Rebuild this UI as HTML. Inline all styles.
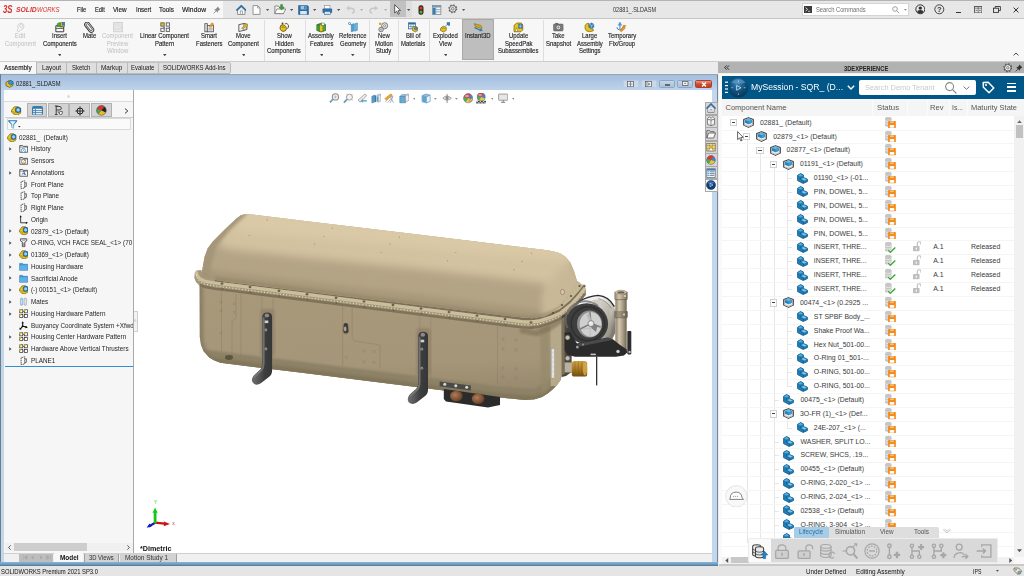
<!DOCTYPE html>
<html lang="en"><head><meta charset="utf-8"><title>SOLIDWORKS Premium 2021 SP3.0 - 02881_.SLDASM</title>
<style>
html,body{margin:0;padding:0}
body{width:1024px;height:576px;overflow:hidden;position:relative;background:#f0f0f0;font-family:"Liberation Sans",sans-serif;}
.r{position:absolute;display:block}
.t{position:absolute;white-space:pre;transform-origin:0 50%;display:block}
.i{font-style:italic}
.b{-webkit-text-stroke:0.15px currentColor}
</style></head><body>
<div class="r" style="left:0px;top:0px;width:1024px;height:18.2px;background:#e7e7e7;"></div>
<div class="r" style="left:0px;top:0px;width:223px;height:18.2px;background:#f7f7f7;"></div>
<div class="r" style="left:0px;top:0px;width:1024px;height:0.9px;background:#b4b4b4;"></div>
<div class="r" style="left:0px;top:17.6px;width:1024px;height:0.9px;background:#c6c6c6;"></div>
<span class="t i" style="left:3.00px;top:2.50px;font-size:10.5px;line-height:12.6px;color:#d9322e;font-weight:bold;transform:scaleX(0.747);">3S</span>
<span class="t i" style="left:16.20px;top:4.80px;font-size:8px;line-height:9.6px;color:#d9322e;font-weight:bold;transform:scaleX(0.847);">SOLID</span>
<span class="t i" style="left:37.20px;top:4.80px;font-size:8px;line-height:9.6px;color:#d9322e;transform:scaleX(0.748);">WORKS</span>
<span class="t b" style="left:76.50px;top:5.20px;font-size:8px;line-height:9.6px;color:#161616;transform:scaleX(0.714);">File</span>
<span class="t b" style="left:94.60px;top:5.20px;font-size:8px;line-height:9.6px;color:#161616;transform:scaleX(0.711);">Edit</span>
<span class="t b" style="left:113.20px;top:5.20px;font-size:8px;line-height:9.6px;color:#161616;transform:scaleX(0.791);">View</span>
<span class="t b" style="left:136.00px;top:5.20px;font-size:8px;line-height:9.6px;color:#161616;transform:scaleX(0.760);">Insert</span>
<span class="t b" style="left:159.00px;top:5.20px;font-size:8px;line-height:9.6px;color:#161616;transform:scaleX(0.793);">Tools</span>
<span class="t b" style="left:182.00px;top:5.20px;font-size:8px;line-height:9.6px;color:#161616;transform:scaleX(0.844);">Window</span>
<svg class="r" style="left:213px;top:5.5px;" width="8" height="8" viewBox="0 0 8 8"><path d="M4.6 0.6 L7.4 3.4 L6.4 3.8 L5 5.2 L4.8 6.8 L1.2 3.2 L2.8 3 L4.2 1.6Z" fill="#8a8a8a"/><path d="M3 5 L0.6 7.4" stroke="#8a8a8a" stroke-width="0.8"/></svg>
<svg class="r" style="left:235.6px;top:4.6px;" width="10.6" height="10" viewBox="0 0 10.6 10"><path d="M1.6 5.4 L1.6 9.4 L9 9.4 L9 5.4" fill="#fff" stroke="#777" stroke-width="0.8"/><path d="M0.4 5.6 L5.3 0.8 L10.2 5.6" fill="none" stroke="#2f6ea5" stroke-width="1.7" stroke-linejoin="miter"/><rect x="4.2" y="6" width="2.2" height="3.4" fill="#fff" stroke="#777" stroke-width="0.6"/></svg>
<svg class="r" style="left:252.4px;top:4.6px;" width="9" height="10" viewBox="0 0 9 10"><path d="M1 0.6 L5.6 0.6 L8 3 L8 9.4 L1 9.4Z" fill="#fdfdfd" stroke="#8a8a8a" stroke-width="0.9" stroke-linejoin="round"/><path d="M5.6 0.6 L5.6 3 L8 3" fill="none" stroke="#8a8a8a" stroke-width="0.7"/></svg>
<svg class="r" style="left:266.4px;top:8.6px;" width="3.2" height="2" viewBox="0 0 3.2 2"><path d="M0 0h3.2l-1.6 2z" fill="#555"/></svg>
<svg class="r" style="left:273.6px;top:4.4px;" width="12.4" height="10.4" viewBox="0 0 12.4 10.4"><path d="M0.8 2 L4.2 2 L5.2 3.2 L9.4 3.2 L9.4 9.6 L0.8 9.6Z" fill="#f3f3f3" stroke="#777" stroke-width="0.8" stroke-linejoin="round"/><path d="M0.8 9.6 L2.8 5 L11.8 5 L9.4 9.6Z" fill="#fff" stroke="#777" stroke-width="0.8" stroke-linejoin="round"/><path d="M6.6 0.6 L6.6 3.4 L5 3.4 L7.6 6 L10.2 3.4 L8.6 3.4 L8.6 0.6Z" fill="#3ea33a" stroke="#1f6f22" stroke-width="0.4"/></svg>
<svg class="r" style="left:289.7px;top:8.6px;" width="3.2" height="2" viewBox="0 0 3.2 2"><path d="M0 0h3.2l-1.6 2z" fill="#555"/></svg>
<svg class="r" style="left:298px;top:4.6px;" width="11" height="10" viewBox="0 0 11 10"><path d="M0.6 0.6 L9.4 0.6 L10.4 1.6 L10.4 9.4 L0.6 9.4Z" fill="#2f6ea5" stroke="#1f4f7c" stroke-width="0.6"/><rect x="2.6" y="0.8" width="5.8" height="3.6" fill="#9cc3e2"/><rect x="6.2" y="1.2" width="1.4" height="2.6" fill="#2f6ea5"/><rect x="2.2" y="6" width="6.6" height="3.4" fill="#d6e6f3"/></svg>
<svg class="r" style="left:313.2px;top:8.6px;" width="3.2" height="2" viewBox="0 0 3.2 2"><path d="M0 0h3.2l-1.6 2z" fill="#555"/></svg>
<svg class="r" style="left:322px;top:4.6px;" width="10.6" height="10" viewBox="0 0 10.6 10"><rect x="2.6" y="0.6" width="5.4" height="3.4" fill="#fff" stroke="#888" stroke-width="0.6"/><rect x="0.5" y="3.4" width="9.6" height="4.6" rx="0.8" fill="#2f6ea5"/><rect x="2.4" y="6.4" width="5.8" height="3.2" fill="#fff" stroke="#2f6ea5" stroke-width="0.7"/><path d="M3.4 7.6h3.8M3.4 8.6h3.8" stroke="#9ab" stroke-width="0.4"/></svg>
<svg class="r" style="left:336.9px;top:8.6px;" width="3.2" height="2" viewBox="0 0 3.2 2"><path d="M0 0h3.2l-1.6 2z" fill="#555"/></svg>
<svg class="r" style="left:345.6px;top:5.2px;" width="9.2" height="8.4" viewBox="0 0 9.2 8.4"><path d="M0.8 3.2 L5 3.2 Q8.2 3.2 8.2 6 Q8.2 8 6 8" fill="none" stroke="#c7c7c7" stroke-width="1.5"/><path d="M0.4 3.2 L3.4 0.6 L3.4 5.8Z" fill="#c7c7c7"/></svg>
<svg class="r" style="left:360px;top:8.6px;" width="3.2" height="2" viewBox="0 0 3.2 2"><path d="M0 0h3.2l-1.6 2z" fill="#b5b5b5"/></svg>
<svg class="r" style="left:369.2px;top:5.2px;" width="9.2" height="8.4" viewBox="0 0 9.2 8.4"><path d="M8.4 3.2 L4.2 3.2 Q1 3.2 1 6 Q1 8 3.2 8" fill="none" stroke="#c7c7c7" stroke-width="1.5"/><path d="M8.8 3.2 L5.8 0.6 L5.8 5.8Z" fill="#c7c7c7"/></svg>
<svg class="r" style="left:383.6px;top:8.6px;" width="3.2" height="2" viewBox="0 0 3.2 2"><path d="M0 0h3.2l-1.6 2z" fill="#b5b5b5"/></svg>
<div class="r" style="left:389.6px;top:0.9px;width:16.2px;height:16.4px;background:#c1c1c1;"></div>
<div class="r" style="left:406.1px;top:0.9px;width:5.8px;height:16.4px;background:#dedede;"></div>
<svg class="r" style="left:393.8px;top:3.8px;" width="8" height="11" viewBox="0 0 8 11"><path d="M0.7 0.7 L0.7 9 L2.7 7.2 L4.1 10.3 L5.4 9.7 L4 6.7 L6.6 6.5Z" fill="#fff" stroke="#3a3a3a" stroke-width="0.8" stroke-linejoin="round"/></svg>
<svg class="r" style="left:407.2px;top:8.6px;" width="3.2" height="2" viewBox="0 0 3.2 2"><path d="M0 0h3.2l-1.6 2z" fill="#555"/></svg>
<svg class="r" style="left:417.8px;top:4.6px;" width="6" height="10" viewBox="0 0 6 10"><rect x="0.5" y="0.3" width="5" height="9.4" rx="2.2" fill="#3b2b1e"/><circle cx="3" cy="2.9" r="1.5" fill="#e23a2a"/><circle cx="3" cy="7" r="1.5" fill="#46b43c"/></svg>
<svg class="r" style="left:432.2px;top:4.6px;" width="9.4" height="10" viewBox="0 0 9.4 10"><rect x="0.5" y="0.5" width="8.4" height="9" fill="#f1f4f7" stroke="#6b7c8c" stroke-width="0.7"/><rect x="0.5" y="0.5" width="8.4" height="2" fill="#7d98b0"/><rect x="0.9" y="2.8" width="2.6" height="6.4" fill="#2f7fc0"/><path d="M4 4.6h4.6M4 6.8h4.6M3.8 2.6v6.8" stroke="#6b7c8c" stroke-width="0.6"/></svg>
<svg class="r" style="left:448px;top:4.4px;" width="9.6" height="9.6" viewBox="0 0 9.6 9.6"><circle cx="4.8" cy="4.8" r="3.3" fill="none" stroke="#6c6c6c" stroke-width="1"/><circle cx="4.8" cy="4.8" r="3.9" fill="none" stroke="#6c6c6c" stroke-width="1.3" stroke-dasharray="1.5 1.56"/><circle cx="4.8" cy="4.8" r="1.3" fill="none" stroke="#6c6c6c" stroke-width="0.8"/></svg>
<svg class="r" style="left:462.4px;top:8.6px;" width="3.2" height="2" viewBox="0 0 3.2 2"><path d="M0 0h3.2l-1.6 2z" fill="#555"/></svg>
<span class="t" style="left:612.50px;top:4.80px;font-size:8px;line-height:9.6px;color:#333;transform:scaleX(0.696);">02881_.SLDASM</span>
<div class="r" style="left:801.8px;top:3.4px;width:106.8px;height:12.2px;background:#fff;border:0.6px solid #d4d4d4;box-sizing:border-box"></div>
<div class="r" style="left:804px;top:5.5px;width:7.6px;height:7px;background:#3c3c3c;"></div>
<svg class="r" style="left:805px;top:6.6px;" width="5.6" height="5" viewBox="0 0 5.6 5"><path d="M0.6 0.6 L2.6 2.4 L0.6 4.2" fill="none" stroke="#fff" stroke-width="0.8"/><path d="M3 4.3h2.2" stroke="#fff" stroke-width="0.7"/></svg>
<span class="t" style="left:815.60px;top:4.90px;font-size:8px;line-height:9.6px;color:#6e6e6e;transform:scaleX(0.724);">Search Commands</span>
<svg class="r" style="left:892.4px;top:5.6px;" width="8" height="8" viewBox="0 0 8 8"><circle cx="3" cy="3" r="2.3" fill="none" stroke="#8a8a8a" stroke-width="0.8"/><path d="M4.7 4.7 L7.2 7.2" stroke="#8a8a8a" stroke-width="0.9"/></svg>
<svg class="r" style="left:903.6px;top:8.6px;" width="3.2" height="2" viewBox="0 0 3.2 2"><path d="M0 0h2.8l-1.4 1.8z" fill="#888"/></svg>
<svg class="r" style="left:914.6px;top:4.2px;" width="10.6" height="10.6" viewBox="0 0 10.6 10.6"><circle cx="5.3" cy="5.3" r="4.5" fill="none" stroke="#333" stroke-width="1"/><circle cx="5.3" cy="4.1" r="1.7" fill="#333"/><path d="M2.2 8.2 Q2.4 6 5.3 6 Q8.2 6 8.4 8.2 Q7 9.6 5.3 9.6 Q3.6 9.6 2.2 8.2Z" fill="#333"/></svg>
<svg class="r" style="left:934px;top:4.2px;" width="10.6" height="10.6" viewBox="0 0 10.6 10.6"><circle cx="5.3" cy="5.3" r="4.5" fill="none" stroke="#333" stroke-width="0.9"/></svg>
<span class="t" style="left:937.01px;top:5.30px;font-size:7.5px;line-height:9.0px;color:#333;font-weight:bold;">?</span>
<div class="r" style="left:956px;top:12px;width:5.4px;height:1.3px;background:#333;"></div>
<svg class="r" style="left:973.5px;top:5.8px;" width="8.4" height="7.4" viewBox="0 0 8.4 7.4"><rect x="0.5" y="0.5" width="7.4" height="6.4" fill="none" stroke="#444" stroke-width="0.8"/><path d="M4.2 0.5v6.4M0.5 2.2h7.4" stroke="#444" stroke-width="0.6"/><path d="M1.6 4.4h1.8M5 4.4h1.8" stroke="#444" stroke-width="0.7"/></svg>
<svg class="r" style="left:993px;top:5.8px;" width="8" height="7" viewBox="0 0 8 7"><rect x="0.5" y="2.2" width="5" height="4.2" fill="none" stroke="#333" stroke-width="0.9"/><path d="M2.2 2.2 L2.2 0.5 L7.4 0.5 L7.4 4.6 L5.6 4.6" fill="none" stroke="#333" stroke-width="0.9"/></svg>
<svg class="r" style="left:1012.6px;top:6.6px;" width="6" height="6" viewBox="0 0 6 6"><path d="M0.6 0.6 L5.4 5.4 M5.4 0.6 L0.6 5.4" stroke="#333" stroke-width="1"/></svg>
<div class="r" style="left:0px;top:18.5px;width:1024px;height:43.3px;background:#f7f7f7;"></div>
<div class="r" style="left:0px;top:61.4px;width:1024px;height:0.9px;background:#cdcdcd;"></div>
<div class="r" style="left:462.3px;top:19.4px;width:31.9px;height:41px;background:#bebebe;border:0.6px solid #a9a9a9;box-sizing:border-box"></div>
<span class="t" style="left:15.36px;top:31.48px;font-size:7.7px;line-height:9.24px;color:#bdbdbd;transform:scaleX(0.775);">Edit</span>
<span class="t" style="left:5.08px;top:38.63px;font-size:7.7px;line-height:9.24px;color:#bdbdbd;transform:scaleX(0.775);">Component</span>
<svg class="r" style="left:15.3px;top:22.2px;" width="10.4" height="10.4" viewBox="0 0 10 10"><path d="M2 8.6 L3.2 6 A3 3 0 1 1 6.2 7.2 L3.6 9.4Z" fill="none" stroke="#cfcfcf" stroke-width="0.9"/><circle cx="6" cy="3.6" r="1.6" fill="none" stroke="#cfcfcf" stroke-width="0.8"/></svg>
<span class="t b" style="left:52.24px;top:31.48px;font-size:7.7px;line-height:9.24px;color:#1c1c1c;transform:scaleX(0.775);">Insert</span>
<span class="t b" style="left:42.78px;top:38.63px;font-size:7.7px;line-height:9.24px;color:#1c1c1c;transform:scaleX(0.775);">Components</span>
<svg class="r" style="left:57.900000000000006px;top:53.8px;" width="3.6" height="2.4" viewBox="0 0 3.6 2.4"><path d="M0 0h3.6l-1.8 2.2z" fill="#444"/></svg>
<svg class="r" style="left:54.5px;top:22.2px;" width="10.4" height="10.4" viewBox="0 0 10 10"><path d="M0.8 3.6 L4 3.6 L4.8 4.6 L8.4 4.6 L8.4 9.4 L0.8 9.4Z" fill="#f6f6f6" stroke="#333" stroke-width="0.9" stroke-linejoin="round"/><path d="M0.8 6.2h7.6" stroke="#333" stroke-width="0.7"/><path d="M2.2 3.4 L2.2 1.6 L4.6 0.6 L7 1.4 L7 4.4 L2.2 4.4Z" fill="#4aa83c" stroke="#1f6f22" stroke-width="0.5"/><rect x="5.6" y="0.8" width="3.8" height="3.4" fill="#e9c21c" stroke="#7a6208" stroke-width="0.5"/><rect x="7" y="0.4" width="2.8" height="2.6" fill="#3a8bd0" stroke="#1c4f80" stroke-width="0.4"/></svg>
<span class="t b" style="left:82.87px;top:31.48px;font-size:7.7px;line-height:9.24px;color:#1c1c1c;transform:scaleX(0.775);">Mate</span>
<svg class="r" style="left:84.3px;top:22.2px;" width="10.4" height="10.4" viewBox="0 0 10 10"><g transform="rotate(-38 5 5)"><rect x="2.6" y="-0.6" width="4.8" height="11.2" rx="2.4" fill="#e9e9e9" stroke="#3c3c3c" stroke-width="0.9"/><rect x="3.9" y="1" width="2.2" height="8" rx="1.1" fill="none" stroke="#3c3c3c" stroke-width="0.7"/></g></svg>
<span class="t" style="left:102.48px;top:31.48px;font-size:7.7px;line-height:9.24px;color:#bdbdbd;transform:scaleX(0.775);">Component</span>
<span class="t" style="left:107.29px;top:38.63px;font-size:7.7px;line-height:9.24px;color:#bdbdbd;transform:scaleX(0.775);">Preview</span>
<span class="t" style="left:107.29px;top:45.78px;font-size:7.7px;line-height:9.24px;color:#bdbdbd;transform:scaleX(0.775);">Window</span>
<svg class="r" style="left:112.7px;top:22.2px;" width="10.4" height="10.4" viewBox="0 0 10 10"><rect x="0.6" y="0.6" width="8.8" height="8.8" fill="#ececec" stroke="#cdcdcd" stroke-width="0.9"/><rect x="2" y="2" width="6" height="5.4" fill="none" stroke="#d6d6d6" stroke-width="0.7"/><circle cx="5.4" cy="5" r="1.6" fill="none" stroke="#d6d6d6" stroke-width="0.7"/></svg>
<span class="t b" style="left:140.45px;top:31.48px;font-size:7.7px;line-height:9.24px;color:#1c1c1c;transform:scaleX(0.775);">Linear Component</span>
<span class="t b" style="left:155.38px;top:38.63px;font-size:7.7px;line-height:9.24px;color:#1c1c1c;transform:scaleX(0.775);">Pattern</span>
<svg class="r" style="left:163.2px;top:53.8px;" width="3.6" height="2.4" viewBox="0 0 3.6 2.4"><path d="M0 0h3.6l-1.8 2.2z" fill="#444"/></svg>
<svg class="r" style="left:159.8px;top:22.2px;" width="10.4" height="10.4" viewBox="0 0 10 10"><rect x="0.8" y="0.8" width="3.2" height="3.2" fill="#e9c21c" stroke="#555" stroke-width="0.8"/><rect x="6" y="0.8" width="3.2" height="3.2" fill="#f2f2f2" stroke="#555" stroke-width="0.8"/><rect x="0.8" y="6" width="3.2" height="3.2" fill="#f2f2f2" stroke="#555" stroke-width="0.8"/><rect x="6" y="6" width="3.2" height="3.2" fill="#f2f2f2" stroke="#555" stroke-width="0.8"/><path d="M3 5.2 L4.6 4.2 L4.6 6.2Z M8.2 5.2 L9.8 4.2 L9.8 6.2Z" fill="#555"/></svg>
<span class="t b" style="left:200.84px;top:31.48px;font-size:7.7px;line-height:9.24px;color:#1c1c1c;transform:scaleX(0.775);">Smart</span>
<span class="t b" style="left:195.53px;top:38.63px;font-size:7.7px;line-height:9.24px;color:#1c1c1c;transform:scaleX(0.775);">Fasteners</span>
<svg class="r" style="left:203.60000000000002px;top:22.2px;" width="10.4" height="10.4" viewBox="0 0 10 10"><rect x="0.8" y="1.6" width="2.4" height="7.8" fill="#e6e6e6" stroke="#555" stroke-width="0.8"/><rect x="3.2" y="3.4" width="6" height="6" fill="#ededed" stroke="#555" stroke-width="0.8"/><path d="M4.4 6h3.8M4.4 7.6h3.8" stroke="#777" stroke-width="0.6"/><path d="M5 4.4 L7.6 0.8 L9.4 2 L7 4.8Z" fill="#f0a01e" stroke="#a8640a" stroke-width="0.4"/></svg>
<span class="t b" style="left:236.00px;top:31.48px;font-size:7.7px;line-height:9.24px;color:#1c1c1c;transform:scaleX(0.775);">Move</span>
<span class="t b" style="left:227.88px;top:38.63px;font-size:7.7px;line-height:9.24px;color:#1c1c1c;transform:scaleX(0.775);">Component</span>
<svg class="r" style="left:241.5px;top:53.8px;" width="3.6" height="2.4" viewBox="0 0 3.6 2.4"><path d="M0 0h3.6l-1.8 2.2z" fill="#444"/></svg>
<svg class="r" style="left:238.10000000000002px;top:22.2px;" width="10.4" height="10.4" viewBox="0 0 10 10"><path d="M0.8 2.6 L5.8 1.4 L5.8 8 L0.8 9.2Z" fill="#f4f4f4" stroke="#444" stroke-width="0.8" stroke-linejoin="round"/><path d="M5.8 1.4 L8.6 2.2 L8.6 7.2 L5.8 8" fill="#dcdcdc" stroke="#444" stroke-width="0.8" stroke-linejoin="round"/><path d="M3.4 5.8 L6.8 3.2 L6.2 2.2 L9.6 2 L8.4 5 L7.8 4.2 L4.2 6.8Z" fill="#e9c21c" stroke="#7a6208" stroke-width="0.4"/></svg>
<span class="t b" style="left:276.84px;top:31.48px;font-size:7.7px;line-height:9.24px;color:#1c1c1c;transform:scaleX(0.775);">Show</span>
<span class="t b" style="left:274.85px;top:38.63px;font-size:7.7px;line-height:9.24px;color:#1c1c1c;transform:scaleX(0.775);">Hidden</span>
<span class="t b" style="left:267.38px;top:45.78px;font-size:7.7px;line-height:9.24px;color:#1c1c1c;transform:scaleX(0.775);">Components</span>
<svg class="r" style="left:279.1px;top:22.2px;" width="10.4" height="10.4" viewBox="0 0 10 10"><path d="M1 5.4 Q1 2.4 4 2.6 L6.4 4.2 Q8 6 6.6 8 Q4.8 9.8 2.6 8.6 Q1 7.6 1 5.4Z" fill="#e9c21c" stroke="#5c4a08" stroke-width="0.8"/><path d="M5.6 1.8 Q7.8 0.6 9 2.8 Q9.6 5 8.2 6.4" fill="none" stroke="#5c4a08" stroke-width="0.9"/><circle cx="3.4" cy="1.4" r="0.9" fill="#444"/><path d="M2.6 5.2 Q4 3.8 5.4 5.6" fill="none" stroke="#5c4a08" stroke-width="0.6"/></svg>
<span class="t b" style="left:308.37px;top:31.48px;font-size:7.7px;line-height:9.24px;color:#1c1c1c;transform:scaleX(0.775);">Assembly</span>
<span class="t b" style="left:309.53px;top:38.63px;font-size:7.7px;line-height:9.24px;color:#1c1c1c;transform:scaleX(0.775);">Features</span>
<svg class="r" style="left:319.5px;top:53.8px;" width="3.6" height="2.4" viewBox="0 0 3.6 2.4"><path d="M0 0h3.6l-1.8 2.2z" fill="#444"/></svg>
<svg class="r" style="left:316.1px;top:22.2px;" width="10.4" height="10.4" viewBox="0 0 10 10"><path d="M0.8 2.6 L5 1.2 L9.2 2.6 L9.2 8.2 L5 9.6 L0.8 8.2Z" fill="#4aa83c" stroke="#1f6f22" stroke-width="0.7" stroke-linejoin="round"/><path d="M3 1.8 L3 9 M0.8 2.6 L5 4 L9.2 2.6 M5 4v5.6" stroke="#1f6f22" stroke-width="0.5" fill="none"/><rect x="3.6" y="2.8" width="3" height="6.4" fill="#e9c21c" stroke="#7a6208" stroke-width="0.4"/><rect x="5.4" y="1" width="2.6" height="2.2" fill="#f6f6f6" stroke="#555" stroke-width="0.4"/></svg>
<span class="t b" style="left:339.23px;top:31.48px;font-size:7.7px;line-height:9.24px;color:#1c1c1c;transform:scaleX(0.775);">Reference</span>
<span class="t b" style="left:339.90px;top:38.63px;font-size:7.7px;line-height:9.24px;color:#1c1c1c;transform:scaleX(0.775);">Geometry</span>
<svg class="r" style="left:351.2px;top:53.8px;" width="3.6" height="2.4" viewBox="0 0 3.6 2.4"><path d="M0 0h3.6l-1.8 2.2z" fill="#444"/></svg>
<svg class="r" style="left:347.8px;top:22.2px;" width="10.4" height="10.4" viewBox="0 0 10 10"><path d="M3.2 2.4 L5.6 1.6 L5.6 8.6 L3.2 9.4Z" fill="#4aa3d6" stroke="#2a78a8" stroke-width="0.5"/><path d="M6.4 1.8 L9 1 L9 8 L6.4 8.8Z" fill="#6bb8e2" stroke="#2a78a8" stroke-width="0.5"/><circle cx="1.4" cy="1.4" r="1" fill="none" stroke="#2a78a8" stroke-width="0.7"/><path d="M2 2 L3.4 3.4" stroke="#2a78a8" stroke-width="0.6"/></svg>
<span class="t b" style="left:377.53px;top:31.48px;font-size:7.7px;line-height:9.24px;color:#1c1c1c;transform:scaleX(0.775);">New</span>
<span class="t b" style="left:374.55px;top:38.63px;font-size:7.7px;line-height:9.24px;color:#1c1c1c;transform:scaleX(0.775);">Motion</span>
<span class="t b" style="left:375.87px;top:45.78px;font-size:7.7px;line-height:9.24px;color:#1c1c1c;transform:scaleX(0.775);">Study</span>
<svg class="r" style="left:378.3px;top:22.2px;" width="10.4" height="10.4" viewBox="0 0 10 10"><circle cx="6.4" cy="3.6" r="2.9" fill="#e4e4e4" stroke="#666" stroke-width="0.8"/><circle cx="6.4" cy="3.6" r="1" fill="#fff" stroke="#666" stroke-width="0.6"/><circle cx="3" cy="7.2" r="2.2" fill="#dcdcdc" stroke="#666" stroke-width="0.8"/><circle cx="3" cy="7.2" r="0.7" fill="#fff" stroke="#666" stroke-width="0.5"/><circle cx="2" cy="1.8" r="1.3" fill="#f0a01e"/></svg>
<span class="t b" style="left:405.70px;top:31.48px;font-size:7.7px;line-height:9.24px;color:#1c1c1c;transform:scaleX(0.775);">Bill of</span>
<span class="t b" style="left:400.90px;top:38.63px;font-size:7.7px;line-height:9.24px;color:#1c1c1c;transform:scaleX(0.775);">Materials</span>
<svg class="r" style="left:407.8px;top:22.2px;" width="10.4" height="10.4" viewBox="0 0 10 10"><rect x="0.6" y="0.8" width="6.6" height="5.8" fill="#fff" stroke="#2a5f8f" stroke-width="0.7"/><rect x="0.6" y="0.8" width="6.6" height="1.6" fill="#2f6ea5"/><path d="M2.8 2.4v4.2M5 2.4v4.2M0.6 4.4h6.6" stroke="#2a5f8f" stroke-width="0.5"/><path d="M4.4 5.2 L7 4 L9.4 5.4 L9.4 8.2 L7 9.6 L4.4 8.2Z" fill="#e9c21c" stroke="#7a6208" stroke-width="0.6"/><path d="M6.2 5.6 L7.8 4.8 L9 5.6 L9 7 L7.6 7.8 L6.2 7Z" fill="#3a8bd0" stroke="#1c4f80" stroke-width="0.4"/></svg>
<span class="t b" style="left:432.86px;top:31.48px;font-size:7.7px;line-height:9.24px;color:#1c1c1c;transform:scaleX(0.775);">Exploded</span>
<span class="t b" style="left:438.89px;top:38.63px;font-size:7.7px;line-height:9.24px;color:#1c1c1c;transform:scaleX(0.775);">View</span>
<svg class="r" style="left:443.5px;top:53.8px;" width="3.6" height="2.4" viewBox="0 0 3.6 2.4"><path d="M0 0h3.6l-1.8 2.2z" fill="#444"/></svg>
<svg class="r" style="left:440.1px;top:22.2px;" width="10.4" height="10.4" viewBox="0 0 10 10"><path d="M0.6 6 L3.2 4 L6 5.2 L6 8 L3.4 9.6 L0.6 8.2Z" fill="#e9c21c" stroke="#7a6208" stroke-width="0.7"/><path d="M2 6.2 Q3.4 5.2 4.6 6.4" fill="none" stroke="#7a6208" stroke-width="0.5"/><path d="M5.2 4.2 L7.6 1.8" stroke="#2a78a8" stroke-width="0.7"/><path d="M6.8 0.6 L9.6 0.6 L9.6 3 L8.4 3.4 L6.8 2.2Z" fill="#3a8bd0" stroke="#1c4f80" stroke-width="0.5"/></svg>
<span class="t b" style="left:465.43px;top:31.48px;font-size:7.7px;line-height:9.24px;color:#1c1c1c;transform:scaleX(0.775);">Instant3D</span>
<svg class="r" style="left:473.0px;top:22.2px;" width="10.4" height="10.4" viewBox="0 0 10 10"><path d="M1.2 1.6 L7.6 3.4 L8.8 6.2 L2.4 4.4Z" fill="#e9c21c" stroke="#7a6208" stroke-width="0.6"/><path d="M2.4 2.6v1.2M3.8 3v1.2M5.2 3.4v1.2M6.6 3.8v1.2" stroke="#7a6208" stroke-width="0.4"/><path d="M1.4 5.4 L7.4 8" stroke="#2a78a8" stroke-width="1.1"/><path d="M6 8.8 L9.4 8.6 L7.6 6Z" fill="#2a78a8"/></svg>
<span class="t b" style="left:508.78px;top:31.48px;font-size:7.7px;line-height:9.24px;color:#1c1c1c;transform:scaleX(0.775);">Update</span>
<span class="t b" style="left:504.63px;top:38.63px;font-size:7.7px;line-height:9.24px;color:#1c1c1c;transform:scaleX(0.775);">SpeedPak</span>
<span class="t b" style="left:498.17px;top:45.78px;font-size:7.7px;line-height:9.24px;color:#1c1c1c;transform:scaleX(0.775);">Subassemblies</span>
<svg class="r" style="left:513.1999999999999px;top:22.2px;" width="10.4" height="10.4" viewBox="0 0 10 10"><path d="M1 3.2 L3.8 1 L8 1 L9.4 3 L9.4 7.6 L7.6 9.4 L1 9.4Z" fill="#e9c21c" stroke="#7a6208" stroke-width="0.7" stroke-linejoin="round"/><path d="M5.4 2.2 L8.8 2.2 L8.8 6 L5.4 6Z" fill="#3a8bd0" stroke="#1c4f80" stroke-width="0.5"/><path d="M2 9 L3.4 5.4 L4.8 9Z" fill="#fff" stroke="#7a6208" stroke-width="0.5"/><path d="M7.1 2.2v3.8M5.4 4.1h3.4" stroke="#cfe6f8" stroke-width="0.4"/></svg>
<span class="t b" style="left:552.20px;top:31.48px;font-size:7.7px;line-height:9.24px;color:#1c1c1c;transform:scaleX(0.775);">Take</span>
<span class="t b" style="left:545.89px;top:38.63px;font-size:7.7px;line-height:9.24px;color:#1c1c1c;transform:scaleX(0.775);">Snapshot</span>
<svg class="r" style="left:553.3px;top:22.2px;" width="10.4" height="10.4" viewBox="0 0 10 10"><rect x="0.5" y="2" width="9.2" height="6.6" rx="0.8" fill="#7d7d7d" stroke="#555" stroke-width="0.5"/><rect x="2.2" y="0.9" width="2.8" height="1.4" fill="#666"/><circle cx="5.2" cy="5.3" r="2.3" fill="#e6e6e6" stroke="#444" stroke-width="0.6"/><circle cx="5.2" cy="5.3" r="1" fill="#7d7d7d"/></svg>
<span class="t b" style="left:581.87px;top:31.48px;font-size:7.7px;line-height:9.24px;color:#1c1c1c;transform:scaleX(0.775);">Large</span>
<span class="t b" style="left:576.57px;top:38.63px;font-size:7.7px;line-height:9.24px;color:#1c1c1c;transform:scaleX(0.775);">Assembly</span>
<span class="t b" style="left:578.72px;top:45.78px;font-size:7.7px;line-height:9.24px;color:#1c1c1c;transform:scaleX(0.775);">Settings</span>
<svg class="r" style="left:584.3px;top:22.2px;" width="10.4" height="10.4" viewBox="0 0 10 10"><path d="M1 5.4 Q0.6 1.6 4.4 1.2 L4.8 5 Q5.4 7 8.6 6.6 L9 8.4 Q5 10.2 2.2 8.4 Q1 7.2 1 5.4Z" fill="#e9c21c" stroke="#7a6208" stroke-width="0.7"/><path d="M5 2.2 L7.2 1 L9.4 2.2 L9.4 5 L7.2 6.2 L5 5Z" fill="#3a8bd0" stroke="#1c4f80" stroke-width="0.5"/><path d="M5 2.2 L7.2 3.4 L9.4 2.2M7.2 3.4v2.8" stroke="#cfe6f8" stroke-width="0.4" fill="none"/></svg>
<span class="t b" style="left:607.51px;top:31.48px;font-size:7.7px;line-height:9.24px;color:#1c1c1c;transform:scaleX(0.775);">Temporary</span>
<span class="t b" style="left:608.50px;top:38.63px;font-size:7.7px;line-height:9.24px;color:#1c1c1c;transform:scaleX(0.775);">Fix/Group</span>
<svg class="r" style="left:616.4px;top:22.2px;" width="10.4" height="10.4" viewBox="0 0 10 10"><path d="M3.8 1v5.6M1.8 2.8h4M0.8 5 Q1.2 7.6 3.8 7.6 Q6.4 7.6 6.8 5" fill="none" stroke="#2f7fc0" stroke-width="0.9"/><circle cx="3.8" cy="1.2" r="0.8" fill="none" stroke="#2f7fc0" stroke-width="0.6"/><path d="M4 8.6 L7.4 3 L9.6 3.6 L8 5.4 L9 5.8 L5.2 9.4Z" fill="#f0901e" stroke="#b25e0a" stroke-width="0.4"/></svg>
<div class="r" style="left:263.7px;top:20px;width:0.8px;height:40.5px;background:#dedede;"></div>
<div class="r" style="left:305.4px;top:20px;width:0.8px;height:40.5px;background:#dedede;"></div>
<div class="r" style="left:369.3px;top:20px;width:0.8px;height:40.5px;background:#dedede;"></div>
<div class="r" style="left:397.5px;top:20px;width:0.8px;height:40.5px;background:#dedede;"></div>
<div class="r" style="left:428.8px;top:20px;width:0.8px;height:40.5px;background:#dedede;"></div>
<div class="r" style="left:543px;top:20px;width:0.8px;height:40.5px;background:#dedede;"></div>
<svg class="r" style="left:1013px;top:52.4px;" width="6" height="4" viewBox="0 0 6 4"><path d="M0.6 3.4 L3 1 L5.4 3.4" fill="none" stroke="#333" stroke-width="0.9"/></svg>
<div class="r" style="left:0px;top:62.2px;width:1024px;height:11.3px;background:#ebebeb;"></div>
<div class="r" style="left:36px;top:62.6px;width:193.5px;height:10.6px;background:#dedede;"></div>
<div class="r" style="left:0px;top:62.2px;width:36px;height:11.3px;background:#f7f7f7;"></div>
<span class="t b" style="left:4.20px;top:63.40px;font-size:8px;line-height:9.6px;color:#161616;transform:scaleX(0.796);">Assembly</span>
<span class="t" style="left:41.60px;top:63.40px;font-size:8px;line-height:9.6px;color:#161616;transform:scaleX(0.791);">Layout</span>
<span class="t" style="left:71.60px;top:63.40px;font-size:8px;line-height:9.6px;color:#161616;transform:scaleX(0.752);">Sketch</span>
<span class="t" style="left:100.60px;top:63.40px;font-size:8px;line-height:9.6px;color:#161616;transform:scaleX(0.802);">Markup</span>
<span class="t" style="left:130.60px;top:63.40px;font-size:8px;line-height:9.6px;color:#161616;transform:scaleX(0.752);">Evaluate</span>
<span class="t" style="left:162.60px;top:63.40px;font-size:8px;line-height:9.6px;color:#161616;transform:scaleX(0.749);">SOLIDWORKS Add-Ins</span>
<div class="r" style="left:36px;top:62.6px;width:0.8px;height:10.7px;background:#b9b9b9;"></div>
<div class="r" style="left:65.5px;top:62.6px;width:0.8px;height:10.7px;background:#b9b9b9;"></div>
<div class="r" style="left:95.5px;top:62.6px;width:0.8px;height:10.7px;background:#b9b9b9;"></div>
<div class="r" style="left:126.5px;top:62.6px;width:0.8px;height:10.7px;background:#b9b9b9;"></div>
<div class="r" style="left:158px;top:62.6px;width:0.8px;height:10.7px;background:#b9b9b9;"></div>
<div class="r" style="left:229.5px;top:62.6px;width:0.8px;height:10.7px;background:#b9b9b9;"></div>
<div class="r" style="left:36px;top:62.3px;width:194px;height:0.7px;background:#c4c4c4;"></div>
<div class="r" style="left:36px;top:72.9px;width:194px;height:0.7px;background:#b9b9b9;"></div>
<div class="r" style="left:718.1px;top:62.3px;width:305.9px;height:11.0px;background:#b2b2b2;"></div>
<span class="t" style="left:844.30px;top:63.50px;font-size:7.5px;line-height:9.0px;color:#222;font-weight:bold;transform:scaleX(0.763);">3DEXPERIENCE</span>
<svg class="r" style="left:724px;top:64.8px;" width="5.6" height="5.2" viewBox="0 0 5.6 5.2"><path d="M2.6 0.5 L0.6 2.6 L2.6 4.7 M5 0.5 L3 2.6 L5 4.7" fill="none" stroke="#222" stroke-width="0.9"/></svg>
<svg class="r" style="left:1002.5px;top:63px;" width="9.6" height="9.6" viewBox="0 0 9.6 9.6"><circle cx="4.8" cy="4.8" r="3.2" fill="#f3f3f3" stroke="#555" stroke-width="0.9"/><circle cx="4.8" cy="4.8" r="3.9" fill="none" stroke="#555" stroke-width="1.2" stroke-dasharray="1.5 1.56"/><circle cx="4.8" cy="4.8" r="1.2" fill="none" stroke="#555" stroke-width="0.7"/></svg>
<svg class="r" style="left:1014.5px;top:63.6px;" width="8" height="8" viewBox="0 0 8 8"><path d="M4.4 0.6 L7.4 3.6 L6.2 4 L5 5.2 L4.8 6.8 L1.2 3.2 L2.8 3 L4 1.8Z" fill="#333"/><path d="M3 5 L0.6 7.4" stroke="#333" stroke-width="0.8"/></svg>
<div class="r" style="left:0px;top:73.5px;width:718.6px;height:492px;background:#c3d7ec;"></div>
<div class="r" style="left:1px;top:74.5px;width:716px;height:15.7px;background:linear-gradient(#a3bedf,#bed3ea);"></div>
<div class="r" style="left:0px;top:73.5px;width:718.6px;height:1px;background:#98a2ae;"></div>
<div class="r" style="left:0px;top:73.5px;width:1.1px;height:492px;background:#6f7c8a;"></div>
<div class="r" style="left:716.9px;top:74.5px;width:1.1px;height:491px;background:#73889b;"></div>
<div class="r" style="left:718px;top:73.5px;width:0.8px;height:492px;background:#ececec;"></div>
<div class="r" style="left:0px;top:562px;width:718px;height:3.4px;background:linear-gradient(#8fb4d6,#5d93bd);"></div>
<div class="r" style="left:0px;top:564.8px;width:718px;height:0.9px;background:#5c7f93;"></div>
<span class="t" style="left:15.50px;top:79.10px;font-size:7.5px;line-height:9.0px;color:#1a1a1a;transform:scaleX(0.768);">02881_.SLDASM</span>
<svg class="r" style="left:5px;top:78.5px;" width="9" height="9" viewBox="0 0 9 9"><path d="M1 3.4 L4.4 1.4 L8 3 L8 6.4 L4.6 8.4 L1 6.6Z" fill="#e9c21c" stroke="#5a4a08" stroke-width="0.7"/><path d="M3.6 2.4 L6 1.4 L8 2.6 L8 5 L5.6 6 L3.6 4.8Z" fill="#3f8fd0" stroke="#1d4e7c" stroke-width="0.5"/></svg>
<div class="r" style="left:623.1px;top:79.7px;width:15.9px;height:8.7px;background:#c9d9ea;border:0.6px solid #bccde0;box-sizing:border-box;border-radius:1.5px"></div>
<div class="r" style="left:641.2px;top:79.7px;width:15.8px;height:8.7px;background:#c9d9ea;border:0.6px solid #bccde0;box-sizing:border-box;border-radius:1.5px"></div>
<div class="r" style="left:658.9px;top:79.7px;width:16.4px;height:8.7px;background:linear-gradient(#c4d5e8,#a9c0da);border:0.6px solid #8ea6c0;box-sizing:border-box;border-radius:1.5px"></div>
<div class="r" style="left:677.3px;top:79.7px;width:15.8px;height:8.7px;background:linear-gradient(#c4d5e8,#a9c0da);border:0.6px solid #8ea6c0;box-sizing:border-box;border-radius:1.5px"></div>
<div class="r" style="left:695.1px;top:79.7px;width:16.6px;height:8.7px;background:linear-gradient(#e39a86,#cf4a30 55%,#c23c22);border:0.6px solid #a8402e;box-sizing:border-box;border-radius:1.5px"></div>
<svg class="r" style="left:700.6px;top:81.6px;" width="6" height="5" viewBox="0 0 6 5"><path d="M1 0.6 L5 4.4 M5 0.6 L1 4.4" stroke="#fff" stroke-width="1.4"/></svg>
<svg class="r" style="left:627.2px;top:80.7px;" width="7" height="6.4" viewBox="0 0 7 6.4"><rect x="0.4" y="0.4" width="6.2" height="5.4" fill="#eef2f6" stroke="#555" stroke-width="0.7"/><path d="M3.5 0.6v5M1.6 3.1h1.2M4.2 3.1h1.2" stroke="#555" stroke-width="0.7"/></svg>
<svg class="r" style="left:645.3px;top:80.7px;" width="7" height="6.4" viewBox="0 0 7 6.4"><rect x="0.4" y="0.4" width="6.2" height="5.4" fill="#eef2f6" stroke="#555" stroke-width="0.7"/><path d="M2 0.6v5" stroke="#555" stroke-width="0.7"/><path d="M3.4 1.8 L5.2 3.1 L3.4 4.4Z" fill="#555"/></svg>
<div class="r" style="left:664.6px;top:84.2px;width:5.2px;height:1.5px;background:#f4f6f8;border:0.4px solid #667;box-sizing:border-box"></div>
<svg class="r" style="left:682.2px;top:81.2px;" width="6.4" height="5" viewBox="0 0 6.4 5"><rect x="0.4" y="0.4" width="5.6" height="4" fill="#eef2f6" stroke="#555" stroke-width="0.7"/><path d="M2.2 2.4h2" stroke="#555" stroke-width="0.7"/></svg>
<svg width="0" height="0" style="position:absolute"><defs>
<symbol id="lasm" viewBox="0 0 20 18" preserveAspectRatio="none"><path d="M0.9 8.2 L6.4 1.6 L12 1.2 L19 4.6 L19 13.2 L12.6 17 L6.2 16 L0.9 11.4Z" fill="#ecc81f" stroke="#6f5a08" stroke-width="1.3" stroke-linejoin="round"/><path d="M1.4 9 L6.6 12 L12.4 13 M6.6 12 L6.4 15.6" fill="none" stroke="#a8860c" stroke-width="1"/>
<path d="M8.8 4.4 L13.6 2 L18.6 4.4 L18.6 10.4 L13.8 12.8 L8.8 10.4Z" fill="#2f86d4" stroke="#15406e" stroke-width="1.2" stroke-linejoin="round"/><path d="M11 5.6 L13.8 4.4 L16.6 5.6 L16.6 9.2 L13.8 10.4 L11 9.2Z" fill="#9fd2f4"/></symbol>
<symbol id="lfld" viewBox="0 0 20 20"><path d="M1.6 3.2 L7.6 3.2 L9 5 L18.4 5 L18.4 17.6 L1.6 17.6Z" fill="#fbfbfb" stroke="#4a4a4a" stroke-width="1.8" stroke-linejoin="round"/><path d="M1.6 6.6h16.8" stroke="#4a4a4a" stroke-width="1.3"/></symbol>
<symbol id="lbfld" viewBox="0 0 20 20"><path d="M1.4 2.8 L7.8 2.8 L9.4 4.8 L18.6 4.8 L18.6 17.8 L1.4 17.8Z" fill="#3f96d6" stroke="#1f6aa6" stroke-width="1.1" stroke-linejoin="round"/><path d="M2 6.6 L18 6.6 L18 17.2 L2 17.2Z" fill="#5fb0e6"/></symbol>
<symbol id="lpln" viewBox="0 0 20 20" preserveAspectRatio="none"><path d="M4.6 3.6 L4.6 18.6 L12.4 16.8 L12.4 1.6Z" fill="#fdfdfd" stroke="#333" stroke-width="1.7" stroke-dasharray="3.4 1.2"/><path d="M12.4 6.6 L16 5.8 L16 13.4 L12.4 14.2" fill="none" stroke="#333" stroke-width="1.5"/></symbol>
<symbol id="lorg" viewBox="0 0 20 20" preserveAspectRatio="none"><path d="M3.6 2 L3.6 16.6 L17 16.6" fill="none" stroke="#111" stroke-width="1.7"/><path d="M1.4 5 L3.6 0.6 L5.8 5Z M15 14.2 L19.6 16.6 L15 19Z" fill="#111"/></symbol>
<symbol id="lbolt" viewBox="0 0 20 20" preserveAspectRatio="none"><path d="M3.2 1.6 L16.8 1.6 L16.8 6.4 L12.8 8.4 L12.8 18.6 L7.2 18.6 L7.2 8.4 L3.2 6.4Z" fill="#f4f4f4" stroke="#2c2c2c" stroke-width="1.5" stroke-linejoin="round"/><path d="M7.2 11h5.6M7.2 13.6h5.6M7.2 16.2h5.6" stroke="#2c2c2c" stroke-width="1"/><ellipse cx="10" cy="4" rx="4.2" ry="1.3" fill="#fff" stroke="#2c2c2c" stroke-width="0.8"/></symbol>
<symbol id="lmate" viewBox="0 0 20 20"><rect x="3" y="2" width="5.4" height="16" rx="2.7" fill="#a9cdea" stroke="#6d9cc4" stroke-width="1"/><rect x="11" y="2" width="5.4" height="16" rx="2.7" fill="#cfd6dc" stroke="#8b9aa8" stroke-width="1"/><path d="M5.7 6v8M13.7 6v8" stroke="#fff" stroke-width="1"/></symbol>
<symbol id="lpat" viewBox="0 0 20 20" preserveAspectRatio="none"><g fill="#fff" stroke="#2a2a2a" stroke-width="1.5"><rect x="1.6" y="1.6" width="6.6" height="6.6"/><rect x="11.8" y="1.6" width="6.6" height="6.6"/><rect x="1.6" y="11.8" width="6.6" height="6.6"/><rect x="11.8" y="11.8" width="6.6" height="6.6"/></g><rect x="1" y="1" width="4.2" height="4.2" fill="#e9c41e"/><rect x="11.2" y="1" width="3.6" height="3.6" fill="#e9c41e"/><rect x="1" y="11.2" width="3.6" height="3.6" fill="#e9c41e"/><path d="M8.6 4.9 L10.8 3.4 L10.8 6.4Z M8.6 15.1 L10.8 13.6 L10.8 16.6Z" fill="#2a2a2a"/></symbol>
<symbol id="lcsys" viewBox="0 0 20 20" preserveAspectRatio="none"><path d="M8 11 L8 3 M8 11 L17 13 M8 11 L3 17" stroke="#111" stroke-width="2.3" fill="none"/><path d="M5.4 5 L8 0.6 L10.6 5Z M14.4 10.4 L19.4 13.6 L13.6 15.2Z M1 13.6 L1.4 19 L6.2 17Z" fill="#111"/><circle cx="8" cy="11" r="2.2" fill="#111"/></symbol>
</defs></svg>
<div class="r" style="left:4.3px;top:90.2px;width:129.3px;height:463.1px;background:#f6f6f6;"></div>
<div class="r" style="left:133.2px;top:90.2px;width:0.9px;height:463.1px;background:#a9a9a9;"></div>
<div class="r" style="left:4.3px;top:90.2px;width:129px;height:11.2px;background:#fbfbfb;"></div>
<div class="r" style="left:4.3px;top:101.4px;width:129px;height:0.8px;background:#dcdcdc;"></div>
<svg class="r" style="left:66.5px;top:95px;" width="3" height="3" viewBox="0 0 3 3"><circle cx="1.5" cy="1.5" r="1" fill="#ddd" stroke="#bbb" stroke-width="0.4"/></svg>
<div class="r" style="left:26.6px;top:103.3px;width:20.9px;height:13.9px;background:#d3d3d3;border:0.6px solid #b2b2b2;box-sizing:border-box"></div>
<div class="r" style="left:47.9px;top:103.3px;width:20.9px;height:13.9px;background:#d3d3d3;border:0.6px solid #b2b2b2;box-sizing:border-box"></div>
<div class="r" style="left:69.3px;top:103.3px;width:20.9px;height:13.9px;background:#d3d3d3;border:0.6px solid #b2b2b2;box-sizing:border-box"></div>
<div class="r" style="left:90.7px;top:103.3px;width:20.9px;height:13.9px;background:#d3d3d3;border:0.6px solid #b2b2b2;box-sizing:border-box"></div>
<div class="r" style="left:5px;top:117.2px;width:128px;height:0.6px;background:#cfcfcf;"></div>
<svg class="r" style="left:11.30px;top:105.50px" width="10.4" height="9.6"><use href="#lasm"/></svg>
<svg class="r" style="left:31.6px;top:105.6px;" width="11" height="9.6" viewBox="0 0 11 9.6"><rect x="0.6" y="0.6" width="9.8" height="8.4" rx="0.8" fill="#f2f6fa" stroke="#2e6f9f" stroke-width="1"/><rect x="0.6" y="0.6" width="9.8" height="2.2" fill="#2f7fb5"/><path d="M1 4.6h9M1 6.6h9M3.4 3v6" stroke="#2e6f9f" stroke-width="0.8"/></svg>
<svg class="r" style="left:53.5px;top:105.2px;" width="10" height="10.4" viewBox="0 0 10 10.4"><path d="M2.2 1 L2.2 9.6 M2.2 1.4 L5 1.4 Q7.4 1.4 7.4 3.2 Q7.4 5 5 5 L2.2 5 M0.8 1h2.8M0.8 9.6h2.8" fill="none" stroke="#333" stroke-width="0.9"/><path d="M4 6.4 L6 9 L8.4 6.4" fill="none" stroke="#333" stroke-width="0.8"/><circle cx="6.8" cy="8" r="1.6" fill="#fff" stroke="#333" stroke-width="0.7"/></svg>
<svg class="r" style="left:75px;top:105.7px;" width="10" height="10" viewBox="0 0 10 10"><circle cx="5" cy="5" r="3" fill="none" stroke="#222" stroke-width="1"/><path d="M5 0.4v9.2M0.4 5h9.2" stroke="#222" stroke-width="0.9"/></svg>
<svg class="r" style="left:96px;top:105.2px;" width="11" height="11" viewBox="0 0 11 11"><circle cx="5.4" cy="5.4" r="4.8" fill="#3a73c9"/><path d="M5.4 5.4 L0.8 4 A4.8 4.8 0 0 1 8.6 1.8Z" fill="#d8362b"/><path d="M5.4 5.4 L8.6 1.8 A4.8 4.8 0 0 1 9.6 7.6Z" fill="#222"/><path d="M5.4 5.4 L9.6 7.6 A4.8 4.8 0 0 1 2.2 9Z" fill="#f2b91d"/><path d="M5.4 5.4 L2.2 9 A4.8 4.8 0 0 1 0.8 4Z" fill="#4aa83c"/><circle cx="5.4" cy="5.4" r="4.8" fill="none" stroke="#555" stroke-width="0.5"/></svg>
<svg class="r" style="left:124px;top:108px;" width="5" height="6" viewBox="0 0 5 6"><path d="M1 0.6 L3.8 3 L1 5.4" fill="none" stroke="#333" stroke-width="1"/></svg>
<div class="r" style="left:7px;top:118.3px;width:123.6px;height:12px;background:#fafafa;border:0.7px solid #d9d9d9;box-sizing:border-box"></div>
<svg class="r" style="left:8.2px;top:120.2px;" width="10" height="9" viewBox="0 0 10 9"><defs><linearGradient id="fg" x1="0" y1="0" x2="0" y2="1"><stop offset="0" stop-color="#1f78b4"/><stop offset="1" stop-color="#9fc6e0"/></linearGradient></defs><path d="M0.6 0.8 L8.8 0.8 L5.6 4.6 L5.6 8.2 L3.8 7.4 L3.8 4.6Z" fill="#eef5fa" stroke="url(#fg)" stroke-width="1.1" stroke-linejoin="round"/></svg>
<svg class="r" style="left:18.3px;top:126px;" width="3" height="2" viewBox="0 0 3 2"><path d="M0 0h2.6l-1.3 1.6z" fill="#333"/></svg>
<span class="t" style="left:18.80px;top:132.70px;font-size:8px;line-height:9.6px;color:#1e1e1e;transform:scaleX(0.790);">02881_  (Default)</span>
<svg class="r" style="left:7.20px;top:132.50px" width="9.6" height="9.4"><use href="#lasm"/></svg>
<span class="t" style="left:31.00px;top:144.44px;font-size:8px;line-height:9.6px;color:#1e1e1e;transform:scaleX(0.790);">History</span>
<svg class="r" style="left:9px;top:147.145px;" width="3" height="4" viewBox="0 0 3 4"><path d="M0.2 0.2l2.4 1.8L0.2 3.8z" fill="#555"/></svg>
<svg class="r" style="left:18.70px;top:144.34px" width="9.4" height="9.4"><use href="#lfld"/></svg>
<svg class="r" style="left:21.3px;top:147.54500000000002px;" width="5" height="5" viewBox="0 0 5 5"><circle cx="2.4" cy="2.4" r="2" fill="#fff" stroke="#2f7fc0" stroke-width="0.7"/><path d="M2.4 1.2v1.3l1 0.6" stroke="#2f7fc0" stroke-width="0.5" fill="none"/></svg>
<span class="t" style="left:31.00px;top:156.19px;font-size:8px;line-height:9.6px;color:#1e1e1e;transform:scaleX(0.790);">Sensors</span>
<svg class="r" style="left:18.70px;top:156.09px" width="9.4" height="9.4"><use href="#lfld"/></svg>
<svg class="r" style="left:21.099999999999998px;top:159.19000000000003px;" width="5.4" height="5.4" viewBox="0 0 5.4 5.4"><circle cx="2.6" cy="2.6" r="2.2" fill="#fff" stroke="#444" stroke-width="0.6"/><path d="M2.6 2.6 L3.8 1.2" stroke="#d03a2a" stroke-width="0.7"/><path d="M0.8 3.4 A2.2 2.2 0 0 0 4.4 3.4" fill="#e8a51c"/></svg>
<span class="t" style="left:31.00px;top:167.93px;font-size:8px;line-height:9.6px;color:#1e1e1e;transform:scaleX(0.790);">Annotations</span>
<svg class="r" style="left:9px;top:170.635px;" width="3" height="4" viewBox="0 0 3 4"><path d="M0.2 0.2l2.4 1.8L0.2 3.8z" fill="#555"/></svg>
<svg class="r" style="left:18.70px;top:167.83px" width="9.4" height="9.4"><use href="#lfld"/></svg>
<span class="t" style="left:21.60px;top:169.94px;font-size:6px;line-height:7.2px;color:#1f5fa8;font-weight:bold;font-family:'Liberation Serif',serif;">A</span>
<span class="t" style="left:31.00px;top:179.68px;font-size:8px;line-height:9.6px;color:#1e1e1e;transform:scaleX(0.790);">Front Plane</span>
<svg class="r" style="left:18.90px;top:179.68px" width="9.2" height="9.4"><use href="#lpln"/></svg>
<span class="t" style="left:31.00px;top:191.42px;font-size:8px;line-height:9.6px;color:#1e1e1e;transform:scaleX(0.790);">Top Plane</span>
<svg class="r" style="left:18.90px;top:191.43px" width="9.2" height="9.4"><use href="#lpln"/></svg>
<span class="t" style="left:31.00px;top:203.17px;font-size:8px;line-height:9.6px;color:#1e1e1e;transform:scaleX(0.790);">Right Plane</span>
<svg class="r" style="left:18.90px;top:203.17px" width="9.2" height="9.4"><use href="#lpln"/></svg>
<span class="t" style="left:31.00px;top:214.91px;font-size:8px;line-height:9.6px;color:#1e1e1e;transform:scaleX(0.790);">Origin</span>
<svg class="r" style="left:18.90px;top:214.92px" width="9.2" height="9.4"><use href="#lorg"/></svg>
<span class="t" style="left:31.00px;top:226.66px;font-size:8px;line-height:9.6px;color:#1e1e1e;transform:scaleX(0.790);">02879_&lt;1&gt; (Default)</span>
<svg class="r" style="left:9px;top:229.36px;" width="3" height="4" viewBox="0 0 3 4"><path d="M0.2 0.2l2.4 1.8L0.2 3.8z" fill="#555"/></svg>
<svg class="r" style="left:18.70px;top:226.46px" width="9.6" height="9.4"><use href="#lasm"/></svg>
<span class="t" style="left:31.00px;top:238.41px;font-size:8px;line-height:9.6px;color:#1e1e1e;transform:scaleX(0.790);">O-RING, VCH FACE SEAL_&lt;1&gt; (70 DU</span>
<svg class="r" style="left:9px;top:241.10500000000002px;" width="3" height="4" viewBox="0 0 3 4"><path d="M0.2 0.2l2.4 1.8L0.2 3.8z" fill="#555"/></svg>
<svg class="r" style="left:18.90px;top:238.41px" width="9.2" height="9.4"><use href="#lbolt"/></svg>
<span class="t" style="left:31.00px;top:250.15px;font-size:8px;line-height:9.6px;color:#1e1e1e;transform:scaleX(0.790);">01369_&lt;1&gt; (Default)</span>
<svg class="r" style="left:9px;top:252.85px;" width="3" height="4" viewBox="0 0 3 4"><path d="M0.2 0.2l2.4 1.8L0.2 3.8z" fill="#555"/></svg>
<svg class="r" style="left:18.70px;top:249.95px" width="9.6" height="9.4"><use href="#lasm"/></svg>
<span class="t" style="left:31.00px;top:261.90px;font-size:8px;line-height:9.6px;color:#1e1e1e;transform:scaleX(0.790);">Housing Hardware</span>
<svg class="r" style="left:9px;top:264.595px;" width="3" height="4" viewBox="0 0 3 4"><path d="M0.2 0.2l2.4 1.8L0.2 3.8z" fill="#555"/></svg>
<svg class="r" style="left:18.90px;top:261.90px" width="9.2" height="9.4"><use href="#lbfld"/></svg>
<span class="t" style="left:31.00px;top:273.64px;font-size:8px;line-height:9.6px;color:#1e1e1e;transform:scaleX(0.790);">Sacrificial Anode</span>
<svg class="r" style="left:9px;top:276.34000000000003px;" width="3" height="4" viewBox="0 0 3 4"><path d="M0.2 0.2l2.4 1.8L0.2 3.8z" fill="#555"/></svg>
<svg class="r" style="left:18.90px;top:273.64px" width="9.2" height="9.4"><use href="#lbfld"/></svg>
<span class="t" style="left:31.00px;top:285.39px;font-size:8px;line-height:9.6px;color:#1e1e1e;transform:scaleX(0.790);">(-) 00151_&lt;1&gt; (Default)</span>
<svg class="r" style="left:9px;top:288.08500000000004px;" width="3" height="4" viewBox="0 0 3 4"><path d="M0.2 0.2l2.4 1.8L0.2 3.8z" fill="#555"/></svg>
<svg class="r" style="left:18.70px;top:285.19px" width="9.6" height="9.4"><use href="#lasm"/></svg>
<span class="t" style="left:31.00px;top:297.13px;font-size:8px;line-height:9.6px;color:#1e1e1e;transform:scaleX(0.790);">Mates</span>
<svg class="r" style="left:9px;top:299.83px;" width="3" height="4" viewBox="0 0 3 4"><path d="M0.2 0.2l2.4 1.8L0.2 3.8z" fill="#555"/></svg>
<svg class="r" style="left:18.90px;top:297.13px" width="9.2" height="9.4"><use href="#lmate"/></svg>
<span class="t" style="left:31.00px;top:308.88px;font-size:8px;line-height:9.6px;color:#1e1e1e;transform:scaleX(0.790);">Housing Hardware Pattern</span>
<svg class="r" style="left:9px;top:311.575px;" width="3" height="4" viewBox="0 0 3 4"><path d="M0.2 0.2l2.4 1.8L0.2 3.8z" fill="#555"/></svg>
<svg class="r" style="left:18.90px;top:308.88px" width="9.2" height="9.4"><use href="#lpat"/></svg>
<span class="t" style="left:31.00px;top:320.62px;font-size:8px;line-height:9.6px;color:#1e1e1e;transform:scaleX(0.790);">Buoyancy Coordinate System +Xfwd</span>
<svg class="r" style="left:18.90px;top:320.62px" width="9.2" height="9.4"><use href="#lcsys"/></svg>
<span class="t" style="left:31.00px;top:332.37px;font-size:8px;line-height:9.6px;color:#1e1e1e;transform:scaleX(0.790);">Housing Center Hardware Pattern</span>
<svg class="r" style="left:9px;top:335.065px;" width="3" height="4" viewBox="0 0 3 4"><path d="M0.2 0.2l2.4 1.8L0.2 3.8z" fill="#555"/></svg>
<svg class="r" style="left:18.90px;top:332.37px" width="9.2" height="9.4"><use href="#lpat"/></svg>
<span class="t" style="left:31.00px;top:344.11px;font-size:8px;line-height:9.6px;color:#1e1e1e;transform:scaleX(0.790);">Hardware Above Vertical Thrusters</span>
<svg class="r" style="left:9px;top:346.81px;" width="3" height="4" viewBox="0 0 3 4"><path d="M0.2 0.2l2.4 1.8L0.2 3.8z" fill="#555"/></svg>
<svg class="r" style="left:18.90px;top:344.11px" width="9.2" height="9.4"><use href="#lpat"/></svg>
<span class="t" style="left:31.00px;top:355.85px;font-size:8px;line-height:9.6px;color:#1e1e1e;transform:scaleX(0.790);">PLANE1</span>
<svg class="r" style="left:18.90px;top:355.85px" width="9.2" height="9.4"><use href="#lpln"/></svg>
<div class="r" style="left:5px;top:366px;width:128.3px;height:1.1px;background:#2f8fd0;"></div>
<div class="r" style="left:5px;top:542.5px;width:128.3px;height:8.8px;background:#f0f0f0;"></div>
<div class="r" style="left:14px;top:543.2px;width:73px;height:7.6px;background:#cdcdcd;"></div>
<svg class="r" style="left:7.5px;top:544.5px;" width="3" height="5" viewBox="0 0 3 5"><path d="M2.6 0.4 L0.6 2.5 L2.6 4.6" fill="none" stroke="#444" stroke-width="0.9"/></svg>
<svg class="r" style="left:126.5px;top:544.5px;" width="3" height="5" viewBox="0 0 3 5"><path d="M0.4 0.4 L2.4 2.5 L0.4 4.6" fill="none" stroke="#444" stroke-width="0.9"/></svg>
<div class="r" style="left:4.3px;top:553.3px;width:708px;height:8.7px;background:#f0f0f0;"></div>
<div class="r" style="left:4.3px;top:553.3px;width:708px;height:0.6px;background:#cfcfcf;"></div>
<div class="r" style="left:19px;top:553.6px;width:33.7px;height:8.4px;background:#bdbdbd;"></div>
<svg class="r" style="left:22.5px;top:555.3px;" width="5" height="5" viewBox="0 0 5 5"><path d="M0.4 0.4v4.2M4 0.4 L1.4 2.5 L4 4.6Z" fill="#a9a9a9" stroke="#a9a9a9" stroke-width="0.6"/></svg>
<svg class="r" style="left:30px;top:555.3px;" width="5" height="5" viewBox="0 0 5 5"><path d="M3.6 0.4 L1 2.5 L3.6 4.6Z" fill="#a9a9a9"/></svg>
<svg class="r" style="left:38.5px;top:555.3px;" width="5" height="5" viewBox="0 0 5 5"><path d="M1 0.4 L3.6 2.5 L1 4.6Z" fill="#a9a9a9"/></svg>
<svg class="r" style="left:46px;top:555.3px;" width="5" height="5" viewBox="0 0 5 5"><path d="M4.2 0.4v4.2M0.6 0.4 L3.2 2.5 L0.6 4.6Z" fill="#a9a9a9" stroke="#a9a9a9" stroke-width="0.6"/></svg>
<div class="r" style="left:53.7px;top:553.3px;width:29.4px;height:8.7px;background:#f7f7f7;"></div>
<div class="r" style="left:83.6px;top:553.8px;width:35.2px;height:8.2px;background:#d2d2d2;border-right:0.7px solid #9f9f9f;border-left:0.7px solid #9f9f9f;box-sizing:border-box"></div>
<div class="r" style="left:119.5px;top:553.8px;width:57.8px;height:8.2px;background:#d2d2d2;border-right:0.7px solid #9f9f9f;box-sizing:border-box"></div>
<span class="t" style="left:60.00px;top:552.90px;font-size:8px;line-height:9.6px;color:#111;font-weight:bold;transform:scaleX(0.805);">Model</span>
<span class="t" style="left:89.20px;top:552.90px;font-size:8px;line-height:9.6px;color:#333;transform:scaleX(0.731);">3D Views</span>
<span class="t" style="left:124.60px;top:552.90px;font-size:8px;line-height:9.6px;color:#333;transform:scaleX(0.806);">Motion Study 1</span>
<div class="r" style="left:134px;top:90.2px;width:578.3px;height:463.1px;background:#fff;"></div>
<svg class="r" style="left:134px;top:91px" width="570" height="462" viewBox="134 91 570 462"><defs>
<filter id="b3" x="-10%" y="-10%" width="120%" height="120%"><feGaussianBlur stdDeviation="3"/></filter>
<filter id="b5" x="-20%" y="-20%" width="140%" height="140%"><feGaussianBlur stdDeviation="4.5"/></filter>
<filter id="b2" x="-10%" y="-10%" width="120%" height="120%"><feGaussianBlur stdDeviation="1.8"/></filter>
<filter id="b1" x="-10%" y="-10%" width="120%" height="120%"><feGaussianBlur stdDeviation="0.8"/></filter>
<filter id="b05" x="-10%" y="-10%" width="120%" height="120%"><feGaussianBlur stdDeviation="0.45"/></filter>
<clipPath id="clid"><path d="M201.5 276.0 L202.4 269.3 L204.5 257.1 L207.6 248.4 L212.8 241.5 L225.0 229.3 L236.5 218.5 L241.0 215.2 L245.8 213.9 L252.0 214.4 L305.0 220.9 L420.0 234.8 L500.0 244.5 L543.4 249.8 L553.0 251.2 L560.0 253.3 L566.0 257.2 L570.5 262.8 L574.2 271.5 L577.3 281.9 L574.0 289.0 L567.0 298.5 L560.0 306.9 L553.0 312.0 L544.6 316.3 L532.0 318.3 L511.3 316.3 L420.0 305.2 L300.0 290.7 L231.7 282.4 L210.8 279.3 L205.0 278.0Z"/></clipPath>
<clipPath id="cbody"><path d="M199.6 280.0 L199.8 337.0 L201.0 345.0 L203.5 351.0 L209.0 357.3 L214.0 360.3 L220.4 362.7 L300.0 372.6 L400.0 385.1 L500.0 397.6 L525.0 400.0 L534.7 399.3 L542.0 397.0 L548.0 393.3 L553.0 389.0 L557.3 384.5 L560.5 380.0 L562.0 375.0 L561.5 312.0 L550.0 318.0Z"/></clipPath>
<linearGradient id="gbody" x1="0" y1="0" x2="0.12" y2="1"><stop offset="0" stop-color="#a9997b"/><stop offset="0.75" stop-color="#a59679"/><stop offset="1" stop-color="#988a6e"/></linearGradient>
<linearGradient id="gbr" x1="0" y1="0" x2="1" y2="0"><stop offset="0" stop-color="#6e6e6e"/><stop offset="0.35" stop-color="#565656"/><stop offset="0.6" stop-color="#3e3e3e"/><stop offset="1" stop-color="#363636"/></linearGradient>
<radialGradient id="gcu" cx="0.4" cy="0.4" r="0.7"><stop offset="0" stop-color="#b07c58"/><stop offset="1" stop-color="#5e3a22"/></radialGradient>
<linearGradient id="gcyl" x1="0" y1="0" x2="1" y2="0"><stop offset="0" stop-color="#8d8068"/><stop offset="0.35" stop-color="#d2c6ae"/><stop offset="0.7" stop-color="#a39680"/><stop offset="1" stop-color="#6f6553"/></linearGradient>
<linearGradient id="gmot" x1="0" y1="0" x2="1" y2="0.6"><stop offset="0" stop-color="#f6f6f6"/><stop offset="0.5" stop-color="#ececea"/><stop offset="0.8" stop-color="#c2beb4"/><stop offset="1" stop-color="#807c74"/></linearGradient>
<linearGradient id="gbrass" x1="0" y1="0" x2="0" y2="1"><stop offset="0" stop-color="#cfa54c"/><stop offset="0.5" stop-color="#a97a22"/><stop offset="1" stop-color="#6e4c10"/></linearGradient>
</defs>
<path d="M199.6 280.0 L199.8 337.0 L201.0 345.0 L203.5 351.0 L209.0 357.3 L214.0 360.3 L220.4 362.7 L300.0 372.6 L400.0 385.1 L500.0 397.6 L525.0 400.0 L534.7 399.3 L542.0 397.0 L548.0 393.3 L553.0 389.0 L557.3 384.5 L560.5 380.0 L562.0 375.0 L561.5 312.0 L550.0 318.0Z" fill="url(#gbody)"/>
<g clip-path="url(#cbody)">
<path d="M195.0 348.5 L300.0 361.6 L400.0 374.1 L500.0 386.6 L535.0 389.0 L552.0 378.0 L570.0 378.0 L570.0 410.0 L195.0 410.0Z" fill="#8d8166" filter="url(#b1)"/>
<path d="M195.0 355.5 L300.0 368.6 L400.0 381.1 L500.0 393.6 L535.0 396.0 L556.0 384.0 L570.0 384.0 L570.0 410.0 L195.0 410.0Z" fill="#7f7359" filter="url(#b1)" opacity="0.8"/>
<path d="M196.0 280.0 L203.0 280.0 L203.5 340.0 L207.0 352.0 L215.0 360.0 L196.0 365.0Z" fill="#84795e" filter="url(#b2)" opacity="0.8"/>
<path d="M550.5 312.0 L563.0 312.0 L563.0 380.0 L556.0 386.0 L550.5 386.0Z" fill="#b6a989" filter="url(#b05)"/>
<path d="M540.0 322.0 L549.0 322.0 L550.0 388.0 L541.0 396.0Z" fill="#968a6c" filter="url(#b2)" opacity="0.7"/>
<path d="M520.0 327.0 L536.0 330.5 L549.0 325.0 L562.0 316.0 L562.0 323.0 L550.0 331.0 L537.0 336.0 L520.0 333.0Z" fill="#7a6e56" opacity="0.6" filter="url(#b1)"/>
<rect x="260.5" y="309" width="14" height="48" rx="4" fill="#857761" opacity="0.55" filter="url(#b1)"/>
<rect x="416.5" y="328" width="14" height="48" rx="4" fill="#857761" opacity="0.55" filter="url(#b1)"/>
<path d="M221.5 291.0 L221.5 352.0" fill="none" stroke="#8a7b60" stroke-width="0.7" opacity="0.6"/>
<path d="M236.0 294.0 L236.0 318.0 L232.0 321.0 L232.0 356.0" fill="none" stroke="#8a7b60" stroke-width="0.7" opacity="0.6"/>
<path d="M241.0 294.0 L241.0 358.0" fill="none" stroke="#8a7b60" stroke-width="0.7" opacity="0.6"/>
<path d="M262.0 297.0 L262.0 312.0" fill="none" stroke="#8a7b60" stroke-width="0.7" opacity="0.6"/>
<path d="M273.0 298.5 L273.0 313.0" fill="none" stroke="#8a7b60" stroke-width="0.7" opacity="0.6"/>
<path d="M342.7 305.0 L342.7 366.0" fill="none" stroke="#8a7b60" stroke-width="0.7" opacity="0.6"/>
<path d="M352.1 306.0 L352.1 338.0 L355.0 341.0 L380.0 345.0 L380.0 368.0" fill="none" stroke="#8a7b60" stroke-width="0.7" opacity="0.6"/>
<path d="M419.8 314.0 L419.8 332.0" fill="none" stroke="#8a7b60" stroke-width="0.7" opacity="0.6"/>
<path d="M430.8 316.0 L430.8 388.0" fill="none" stroke="#8a7b60" stroke-width="0.7" opacity="0.6"/>
<path d="M497.5 326.0 L497.5 384.0" fill="none" stroke="#8a7b60" stroke-width="0.7" opacity="0.6"/>
<rect x="220" y="301" width="2" height="2" fill="none" stroke="#8f8066" stroke-width="0.5" opacity="0.8"/>
<rect x="220" y="310" width="2" height="2" fill="none" stroke="#8f8066" stroke-width="0.5" opacity="0.8"/>
<rect x="220" y="332" width="2" height="2" fill="none" stroke="#8f8066" stroke-width="0.5" opacity="0.8"/>
<rect x="233.5" y="303" width="2" height="2" fill="none" stroke="#8f8066" stroke-width="0.5" opacity="0.8"/>
<rect x="233.5" y="311.5" width="2" height="2" fill="none" stroke="#8f8066" stroke-width="0.5" opacity="0.8"/>
<rect x="345.5" y="356.5" width="2" height="2" fill="none" stroke="#8f8066" stroke-width="0.5" opacity="0.8"/>
<rect x="363" y="350" width="2" height="2" fill="none" stroke="#8f8066" stroke-width="0.5" opacity="0.8"/>
<rect x="373" y="350.5" width="2" height="2" fill="none" stroke="#8f8066" stroke-width="0.5" opacity="0.8"/>
<rect x="363" y="361" width="2" height="2" fill="none" stroke="#8f8066" stroke-width="0.5" opacity="0.8"/>
<rect x="373" y="361.5" width="2" height="2" fill="none" stroke="#8f8066" stroke-width="0.5" opacity="0.8"/>
<rect x="502" y="338" width="2" height="2" fill="none" stroke="#8f8066" stroke-width="0.5" opacity="0.8"/>
<rect x="515" y="339" width="2" height="2" fill="none" stroke="#8f8066" stroke-width="0.5" opacity="0.8"/>
<rect x="502" y="348" width="2" height="2" fill="none" stroke="#8f8066" stroke-width="0.5" opacity="0.8"/>
<rect x="515" y="349" width="2" height="2" fill="none" stroke="#8f8066" stroke-width="0.5" opacity="0.8"/>
<rect x="502" y="367" width="2" height="2" fill="none" stroke="#8f8066" stroke-width="0.5" opacity="0.8"/>
<rect x="515" y="368" width="2" height="2" fill="none" stroke="#8f8066" stroke-width="0.5" opacity="0.8"/>
<rect x="502" y="376" width="2" height="2" fill="none" stroke="#8f8066" stroke-width="0.5" opacity="0.8"/>
<rect x="515" y="377" width="2" height="2" fill="none" stroke="#8f8066" stroke-width="0.5" opacity="0.8"/>
</g>
<path d="M201.5 271.0 L205.0 277.0 L210.8 278.3 L231.7 281.4 L300.0 289.7 L420.0 304.2 L511.3 315.3 L532.0 317.3 L544.6 315.3 L553.0 311.0 L560.0 305.9 L567.0 297.5 L574.0 288.0 L577.3 281.0 L582.0 284.5 L586.0 289.0 L586.0 294.5 L580.0 301.3 L571.0 311.3 L560.0 320.1 L550.8 324.2 L538.3 328.0 L530.0 328.9 L521.7 328.4 L420.0 315.6 L300.0 300.5 L231.7 291.9 L215.0 289.8 L205.0 288.0 L200.0 285.8 L199.6 285.8 L196.0 282.0 L194.3 278.0 L194.6 273.5 L196.3 270.4 L201.5 270.0Z" fill="#a59878"/>
<path d="M532.0 317.3 L544.6 315.3 L553.0 311.0 L560.0 305.9 L567.0 297.5 L574.0 288.0 L577.3 281.0 L582.0 284.5 L585.6 289.0 L580.0 296.0 L571.0 306.0 L560.0 314.8 L550.8 318.9 L538.3 322.7 L524.0 323.2Z" fill="#c5b896"/>
<path d="M215.0 280.1 L231.7 282.2 L300.0 290.8 L420.0 305.9 L521.7 318.7 L530.0 319.2 L538.3 318.3 L550.8 314.5 L560.0 310.4 L571.0 301.6 L580.0 291.6 L585.0 285.1" fill="none" stroke="#7c7058" stroke-width="2.6" filter="url(#b05)"/>
<path d="M196.2 271.5 L197.2 275.5 L200.0 279.0 L205.0 281.2 L215.0 283.0 L231.7 285.1 L300.0 293.7 L420.0 308.8 L521.7 321.6 L530.0 322.1 L538.3 321.2 L550.8 317.4 L560.0 313.3 L571.0 304.5 L580.0 294.5 L585.0 288.0" fill="none" stroke="#cbbe9d" stroke-width="3.2" stroke-linejoin="round"/>
<path d="M200.0 284.7 L205.0 286.9 L215.0 288.7 L231.7 290.8 L300.0 299.4 L420.0 314.5 L521.7 327.3 L530.0 327.8 L538.3 326.9 L550.8 323.1 L560.0 319.0 L571.0 310.2 L580.0 300.2 L585.0 293.7" fill="none" stroke="#7e7259" stroke-width="2.6" filter="url(#b05)"/>
<path d="M196.2 274.5 L197.2 278.5 L200.0 282.0 L205.0 284.2 L215.0 286.0 L231.7 288.1 L300.0 296.7 L420.0 311.8 L521.7 324.6 L530.0 325.1 L538.3 324.2 L550.8 320.4 L560.0 316.3 L571.0 307.5 L580.0 297.5 L585.0 291.0" fill="none" stroke="#f3eee0" stroke-width="1" stroke-dasharray="1 2.2" opacity="0.95"/>
<ellipse cx="222" cy="283.5" rx="1.4" ry="1.2" fill="#6d6049"/>
<ellipse cx="222.4" cy="288.8" rx="1.1" ry="1" fill="#6f624b" opacity="0.8"/>
<ellipse cx="250" cy="287.0" rx="1.4" ry="1.2" fill="#6d6049"/>
<ellipse cx="250.4" cy="292.3" rx="1.1" ry="1" fill="#6f624b" opacity="0.8"/>
<ellipse cx="279" cy="290.7" rx="1.4" ry="1.2" fill="#6d6049"/>
<ellipse cx="279.4" cy="296.0" rx="1.1" ry="1" fill="#6f624b" opacity="0.8"/>
<ellipse cx="307" cy="294.2" rx="1.4" ry="1.2" fill="#6d6049"/>
<ellipse cx="307.4" cy="299.5" rx="1.1" ry="1" fill="#6f624b" opacity="0.8"/>
<ellipse cx="336" cy="297.8" rx="1.4" ry="1.2" fill="#6d6049"/>
<ellipse cx="336.4" cy="303.1" rx="1.1" ry="1" fill="#6f624b" opacity="0.8"/>
<ellipse cx="364" cy="301.4" rx="1.4" ry="1.2" fill="#6d6049"/>
<ellipse cx="364.4" cy="306.7" rx="1.1" ry="1" fill="#6f624b" opacity="0.8"/>
<ellipse cx="393" cy="305.0" rx="1.4" ry="1.2" fill="#6d6049"/>
<ellipse cx="393.4" cy="310.3" rx="1.1" ry="1" fill="#6f624b" opacity="0.8"/>
<ellipse cx="421" cy="308.5" rx="1.4" ry="1.2" fill="#6d6049"/>
<ellipse cx="421.4" cy="313.8" rx="1.1" ry="1" fill="#6f624b" opacity="0.8"/>
<ellipse cx="449" cy="312.1" rx="1.4" ry="1.2" fill="#6d6049"/>
<ellipse cx="449.4" cy="317.4" rx="1.1" ry="1" fill="#6f624b" opacity="0.8"/>
<ellipse cx="477" cy="315.6" rx="1.4" ry="1.2" fill="#6d6049"/>
<ellipse cx="477.4" cy="320.9" rx="1.1" ry="1" fill="#6f624b" opacity="0.8"/>
<ellipse cx="505" cy="319.1" rx="1.4" ry="1.2" fill="#6d6049"/>
<ellipse cx="505.4" cy="324.4" rx="1.1" ry="1" fill="#6f624b" opacity="0.8"/>
<ellipse cx="531" cy="322.4" rx="1.4" ry="1.2" fill="#6d6049"/>
<ellipse cx="531.4" cy="327.7" rx="1.1" ry="1" fill="#6f624b" opacity="0.8"/>
<path d="M201.5 276.0 L202.4 269.3 L204.5 257.1 L207.6 248.4 L212.8 241.5 L225.0 229.3 L236.5 218.5 L241.0 215.2 L245.8 213.9 L252.0 214.4 L305.0 220.9 L420.0 234.8 L500.0 244.5 L543.4 249.8 L553.0 251.2 L560.0 253.3 L566.0 257.2 L570.5 262.8 L574.2 271.5 L577.3 281.9 L574.0 289.0 L567.0 298.5 L560.0 306.9 L553.0 312.0 L544.6 316.3 L532.0 318.3 L511.3 316.3 L420.0 305.2 L300.0 290.7 L231.7 282.4 L210.8 279.3 L205.0 278.0Z" fill="#b4a486"/>
<g clip-path="url(#clid)">
<path d="M190.0 268.0 L300.0 281.0 L420.0 295.0 L548.0 312.0 L548.0 335.0 L190.0 295.0Z" fill="#a69778" filter="url(#b3)"/>
<path d="M563.0 252.0 L584.0 282.0 L562.0 308.0 L543.0 326.0 L541.0 298.0 L548.0 272.0Z" fill="#c8b898" filter="url(#b3)"/>
<path d="M236.0 196.0 L300.0 199.0 L420.0 213.0 L500.0 223.0 L566.0 232.0 L585.0 252.0 L562.0 268.0 L549.0 284.0 L500.0 278.0 L420.0 269.0 L300.0 257.0 L228.0 249.0 L216.0 243.0 L226.0 224.0Z" fill="#d3c2a0" filter="url(#b5)"/>
<path d="M246.0 200.0 L420.0 216.0 L566.0 235.0 L572.0 260.0 L500.0 256.0 L420.0 248.0 L300.0 237.0 L236.0 231.0Z" fill="#dbcaa7" filter="url(#b5)" opacity="0.85"/>
<path d="M215.0 278.8 L231.7 280.9 L300.0 289.5 L420.0 304.6 L521.7 317.4 L530.0 317.9 L538.3 317.0 L550.8 313.2 L560.0 309.1 L571.0 300.3 L580.0 290.3 L585.0 283.8" fill="none" stroke="#8f8267" stroke-width="4.5" opacity="0.55" filter="url(#b1)"/>
<path d="M192.0 284.0 L197.0 262.0 L203.0 244.0 L218.0 226.0 L240.0 208.0 L247.0 214.0 L230.0 230.0 L216.0 247.0 L211.0 266.0 L209.0 286.0Z" fill="#a39478" filter="url(#b2)" opacity="0.9"/>
</g>
<circle cx="267.2" cy="219.9" r="0.6" fill="#958769" opacity="0.85"/>
<circle cx="249.3" cy="235.5" r="0.6" fill="#958769" opacity="0.85"/>
<circle cx="332.3" cy="228.2" r="0.6" fill="#958769" opacity="0.85"/>
<circle cx="323.7" cy="236.5" r="0.6" fill="#958769" opacity="0.85"/>
<circle cx="314.7" cy="244.2" r="0.6" fill="#958769" opacity="0.85"/>
<circle cx="399.4" cy="237.2" r="0.6" fill="#958769" opacity="0.85"/>
<circle cx="390" cy="244.2" r="0.6" fill="#958769" opacity="0.85"/>
<circle cx="381.1" cy="252.5" r="0.6" fill="#958769" opacity="0.85"/>
<circle cx="455.8" cy="252.5" r="0.6" fill="#958769" opacity="0.85"/>
<circle cx="447.5" cy="260.8" r="0.6" fill="#958769" opacity="0.85"/>
<circle cx="531.5" cy="253.1" r="0.6" fill="#958769" opacity="0.85"/>
<circle cx="522.2" cy="261.4" r="0.6" fill="#958769" opacity="0.85"/>
<circle cx="513.9" cy="269.7" r="0.6" fill="#958769" opacity="0.85"/>
<circle cx="579.5" cy="286" r="1.1" fill="#5f543e"/>
<circle cx="571" cy="296" r="1.1" fill="#5f543e"/>
<circle cx="562" cy="305" r="1.1" fill="#5f543e"/>
<circle cx="553" cy="313" r="1.1" fill="#5f543e"/>
<ellipse cx="562.5" cy="292" rx="2" ry="2.6" fill="#d8ccb0" stroke="#7d6f52" stroke-width="0.6"/>
<path d="M262.3 316.3 Q262.6 312.7 267.2 312.5 Q271.8 312.7 272.1 316.3 L272.1 370.5 Q272.1 374.5 268.9 377.1 L260.8 383.3 Q257.3 385.7 254.3 384.1 Q251.3 382.5 252.0 379.0 Q252.5 376.5 254.3 374.9 L260.3 369.5 Q262.3 367.5 262.3 362.5 Z" fill="url(#gbr)"/>
<path d="M253.7 377.5 L260.7 371.1 Q263.7 368.5 263.7 362.5 L263.7 317.5" stroke="#7a7a7a" stroke-width="1.8" fill="none" opacity="0.85"/>
<ellipse cx="266.90000000000003" cy="315.5" rx="2.3" ry="2" fill="#8a8a86"/>
<rect x="264.7" y="320.5" width="3.6" height="2.6" fill="#cfcfcf"/>
<circle cx="265.90000000000003" cy="330.0" r="1.4" fill="#9d9d9d"/><circle cx="265.90000000000003" cy="330.0" r="0.6" fill="#444"/>
<circle cx="265.90000000000003" cy="349.0" r="1.4" fill="#9d9d9d"/><circle cx="265.90000000000003" cy="349.0" r="0.6" fill="#444"/>
<path d="M418.2 335.5 Q418.5 331.9 423.1 331.7 Q427.7 331.9 428.0 335.5 L428.0 389.7 Q428.0 393.7 424.8 396.3 L416.7 402.5 Q413.2 404.9 410.2 403.3 Q407.2 401.7 407.9 398.2 Q408.4 395.7 410.2 394.1 L416.2 388.7 Q418.2 386.7 418.2 381.7 Z" fill="url(#gbr)"/>
<path d="M409.6 396.7 L416.6 390.3 Q419.6 387.7 419.6 381.7 L419.6 336.7" stroke="#7a7a7a" stroke-width="1.8" fill="none" opacity="0.85"/>
<ellipse cx="422.8" cy="334.7" rx="2.3" ry="2" fill="#8a8a86"/>
<rect x="420.59999999999997" y="339.7" width="3.6" height="2.6" fill="#cfcfcf"/>
<circle cx="421.8" cy="349.2" r="1.4" fill="#9d9d9d"/><circle cx="421.8" cy="349.2" r="0.6" fill="#444"/>
<circle cx="421.8" cy="368.2" r="1.4" fill="#9d9d9d"/><circle cx="421.8" cy="368.2" r="0.6" fill="#444"/>
<ellipse cx="345.8" cy="328.8" rx="3.6" ry="5.8" fill="#867a60" opacity="0.7" filter="url(#b05)"/><path d="M343.8 324 q2.2-2 4 0 l0.6 8 q-2.6 2.4-5 0z" fill="#3f3b36"/><ellipse cx="345.2" cy="329" rx="1.3" ry="2.4" fill="#a9a49a"/>
<ellipse cx="229" cy="357.5" rx="4" ry="2.4" fill="#5b5240" filter="url(#b05)"/>
<path d="M443.8 389.0 L500.0 397.0 L500.0 405.0 L488.0 407.5 L446.0 401.5 L443.8 399.0Z" fill="#2b2b2b"/>
<path d="M439.6 381.5 L470.8 385.6 L470.8 390.6 L439.6 386.2Z" fill="#4a4a48"/>
<circle cx="444.8" cy="384.3" r="1.5" fill="#d8d8d8"/>
<circle cx="455.8" cy="385.7" r="1.5" fill="#d8d8d8"/>
<circle cx="466.7" cy="387.2" r="1.5" fill="#d8d8d8"/>
<ellipse cx="456.3" cy="396" rx="6.3" ry="5.2" fill="url(#gcu)"/>
<ellipse cx="478.1" cy="398.7" rx="6.3" ry="5.2" fill="url(#gcu)"/>
<path d="M561.6 316.0 L566.0 313.5 L571.6 316.0 L571.6 372.0 L566.0 376.0 L561.8 377.0Z" fill="#4f4739"/>
<path d="M562.0 318.0 L564.6 317.0 L564.6 374.0 L562.0 375.0Z" fill="#7b6f58"/>
<rect x="551.2" y="348.6" width="3.4" height="29.5" fill="#e2e2e2" stroke="#8d8d8d" stroke-width="0.4"/><path d="M552.9 352v23" stroke="#9a9a9a" stroke-width="0.5" stroke-dasharray="0.8 4"/>
<path d="M580.0 300.6 L586.1 297.3 L593.0 295.6 L600.1 295.6 L606.0 297.6 L611.0 302.2 L614.0 306.5 L615.3 310.7 L615.2 333.0 L612.0 340.0 L602.0 345.0 L584.0 345.0Z" fill="url(#gmot)"/>
<path d="M592 300 Q603 298 610 306 L611 334 L604 340 Q606 318 592 300Z" fill="#a89f8e" opacity="0.4" filter="url(#b05)"/>
<path d="M578.4 302 Q588 296 598 295.4 Q608.4 296 614.4 306.6" fill="none" stroke="#2b2b2b" stroke-width="1.4"/>
<path d="M598 298.6 Q607.6 300.6 611.6 309" fill="none" stroke="#8a8a8a" stroke-width="0.8"/>
<rect x="615.3" y="297" width="11.4" height="53" fill="url(#gcyl)"/>
<rect x="614.4" y="291.4" width="13.2" height="8" rx="1.2" fill="url(#gcyl)"/>
<ellipse cx="621" cy="292.2" rx="5.4" ry="2" fill="#d6ccb6" stroke="#7d7260" stroke-width="0.5"/><ellipse cx="621" cy="292.4" rx="3.5" ry="1.2" fill="#6b6150"/>
<rect x="614.4" y="311" width="13.2" height="6.6" rx="0.8" fill="url(#gcyl)"/><rect x="614.4" y="311" width="13.2" height="6.6" rx="0.8" fill="#4a4234" opacity="0.35"/>
<path d="M614.6 299.6h12.8M614.6 317.8h12.8" stroke="#5f5646" stroke-width="0.6"/>
<circle cx="624" cy="314.4" r="1" fill="#ddd"/><circle cx="625" cy="296" r="0.9" fill="#e8e2d4"/>
<rect x="627.3" y="331" width="4" height="23.4" rx="0.8" fill="#2d2d2d"/><circle cx="629.6" cy="352" r="1.2" fill="#bbb"/>
<ellipse cx="586.8" cy="323.7" rx="21.3" ry="20.4" fill="#3e3e3e"/>
<path d="M567.6 328 A19.4 18.6 0 0 1 598 306" fill="none" stroke="#6c6c6c" stroke-width="2" opacity="0.75" filter="url(#b05)"/>
<ellipse cx="588" cy="323.8" rx="16.8" ry="17" fill="none" stroke="#2a2a2a" stroke-width="1.4" opacity="0.7"/>
<ellipse cx="589.5" cy="324" rx="12.5" ry="13.4" fill="#8f8f8f"/>
<ellipse cx="590.6" cy="324.3" rx="10.9" ry="12.4" fill="#cfcfcf"/>
<path d="M590 312.4 L590 336 M580.4 329.4 L601.4 326.6" stroke="#b5b5b5" stroke-width="0.7" fill="none"/>
<path d="M591 323.6 L580 329 M591 323.6 L589.8 312.2 M591 323.6 L600.6 327" stroke="#7d7d7d" stroke-width="1.6" fill="none"/>
<path d="M591 322 L597.4 325.4 L596 332 L591.4 328Z" fill="#808080"/><path d="M589.6 321.6 L586.4 315 L589 312.6 L591.4 320.6Z" fill="#b9b9b9"/>
<circle cx="591" cy="323.6" r="3" fill="#e2e2e2" stroke="#6d6d6d" stroke-width="0.7"/><circle cx="590.4" cy="323" r="1.1" fill="#fafafa"/>
<path d="M564.6 332.4 L570.6 332.0 L573.4 337.8 L577.0 343.4 L607.6 337.6 L613.2 339.4 L619.4 344.4 L626.6 349.2 L627.2 352.4 L624.0 355.4 L616.0 356.8 L575.0 356.8 L567.5 354.8 L564.6 350.0Z" fill="#2b2b2b"/>
<path d="M577.0 343.8 L607.6 338.0 L613.0 339.8 L580.0 346.4Z" fill="#4a4a4a"/>
<circle cx="618" cy="351.4" r="1.7" fill="#cfcfcf"/><circle cx="577.4" cy="347" r="1.5" fill="#9a9a9a"/><rect x="590.6" y="353.6" width="5.2" height="1.6" fill="#c4c4c4"/><circle cx="583" cy="344.6" r="1.1" fill="#8a8a8a"/>
<circle cx="567.6" cy="337.6" r="2.3" fill="#c4c0b6" stroke="#6a665c" stroke-width="0.5"/><circle cx="567.6" cy="358.2" r="2.3" fill="#c4c0b6" stroke="#6a665c" stroke-width="0.5"/>
<rect x="564.6" y="362.4" width="8" height="10" fill="#b9b2a0" stroke="#7d776a" stroke-width="0.4"/>
<rect x="571.8" y="361" width="15.4" height="15.6" rx="2.6" fill="url(#gbrass)"/>
<path d="M575 361.6v14.4M578.4 361.2v15.2M581.8 361.2v15.2" stroke="#7d5510" stroke-width="0.6" opacity="0.7"/><ellipse cx="585" cy="368.8" rx="2.2" ry="6.6" fill="#d9aa48" opacity="0.8"/>
<rect x="596" y="356.6" width="1.3" height="28.8" fill="#333"/></svg>
<div class="r" style="left:133.2px;top:90.2px;width:0.9px;height:463.1px;background:#a9a9a9;"></div>
<div class="r" style="left:133.6px;top:310.5px;width:4.2px;height:21px;background:#f3f3f3;border:0.6px solid #d0d0d0;border-left:none;box-sizing:border-box"></div>
<svg class="r" style="left:134.4px;top:319.4px;" width="2.4" height="3" viewBox="0 0 2.4 3"><circle cx="1.2" cy="1.5" r="0.9" fill="#e4e4e4" stroke="#aaa" stroke-width="0.3"/></svg>
<svg class="r" style="left:329.3px;top:93.2px;" width="10.4" height="10.4" viewBox="0 0 10 10"><circle cx="6.2" cy="3.8" r="3" fill="#f1f1f1" stroke="#8d8d8d" stroke-width="1"/><path d="M3.8 6 L0.9 9" stroke="#5a9cc8" stroke-width="1.6"/><path d="M4.6 3.8h3.2M6.2 2.2v3.2" stroke="#9a9a9a" stroke-width="0.5"/></svg>
<svg class="r" style="left:343px;top:93.2px;" width="10.4" height="10.4" viewBox="0 0 10 10"><circle cx="6.2" cy="4" r="2.9" fill="#f1f1f1" stroke="#9a9a9a" stroke-width="0.9"/><path d="M3.8 6.2 L0.9 9.2" stroke="#5a9cc8" stroke-width="1.6"/><path d="M3.2 1 L4 1.8M9.2 1 L8.4 1.8M9.4 7 L8.6 6.4" stroke="#9a9a9a" stroke-width="0.6"/></svg>
<svg class="r" style="left:357px;top:93.2px;" width="10.4" height="10.4" viewBox="0 0 10 10"><path d="M1 7 L7.6 1 L9.4 2.6 L3 8.8Z" fill="#ececec" stroke="#9a9a9a" stroke-width="0.8"/><path d="M4.4 7.6h5" stroke="#5a9cc8" stroke-width="1.3"/><path d="M3.4 7.6 L5.6 5.8 L5.6 9.4Z" fill="#5a9cc8"/></svg>
<svg class="r" style="left:370.8px;top:93.2px;" width="10.4" height="10.4" viewBox="0 0 10 10"><path d="M0.8 3.2 L3.6 2 L3.6 8.6 L0.8 9.6Z" fill="#5a9cc8" stroke="#3b7aa6" stroke-width="0.5"/><path d="M3.6 2 L5 2.6 L5 9 L3.6 8.6Z" fill="#3b7aa6"/><path d="M5.6 2.2 L8.2 1 L9.6 1.6 L9.6 7.6 L7 8.8 L5.6 8.2Z" fill="#dfe7ee" stroke="#7d8a96" stroke-width="0.5"/><path d="M7 2.6 L9.4 1.6 M7 2.6 L7 8.6" stroke="#7d8a96" stroke-width="0.4"/><path d="M5.8 3.4 L7 3.8 L7 8 L5.8 7.6Z" fill="#5a9cc8"/></svg>
<svg class="r" style="left:384.4px;top:93.2px;" width="10.4" height="10.4" viewBox="0 0 10 10"><path d="M0.8 5.4 L6.6 0.8 L8 2.2 L2.4 7Z" fill="#f0a82a" stroke="#c47c12" stroke-width="0.5"/><path d="M1.2 8.8 L5 4.6M3.4 9.4 L7.2 5" stroke="#a9a9a9" stroke-width="0.8"/><path d="M6.2 4 L9.2 9.4M8.6 3.4 L6 9.4" stroke="#8fa2b4" stroke-width="0.8"/><circle cx="7.6" cy="3.4" r="1" fill="#9ab"/></svg>
<svg class="r" style="left:398.6px;top:93.2px;" width="10.4" height="10.4" viewBox="0 0 10 10"><path d="M0.8 3.4 L0.8 9.4 L6.2 9.4 L6.2 3.4Z" fill="#6aa9d2" stroke="#3b7aa6" stroke-width="0.6"/><path d="M0.8 3.4 L2.6 1.6 L6.2 1.6 L6.2 3.4Z" fill="#8fc3e4" stroke="#3b7aa6" stroke-width="0.5"/><path d="M6.2 1.4 L9.2 1 L9.6 7 L6.2 8.6Z" fill="#f1f1f1" stroke="#8d8d8d" stroke-width="0.6"/><path d="M7 2.4 L8.8 2.2" stroke="#8d8d8d" stroke-width="0.5"/></svg>
<svg class="r" style="left:412.5px;top:98px;" width="2.8" height="1.8" viewBox="0 0 2.8 1.8"><path d="M0 0h2.8l-1.4 1.7z" fill="#8a8a8a"/></svg>
<svg class="r" style="left:420.6px;top:93.2px;" width="10.4" height="10.4" viewBox="0 0 10 10"><path d="M1 2.6 L4.4 1 L8.8 2 L8.8 8 L5.2 9.6 L1 8.4Z" fill="#8ec0e0" stroke="#5a93b8" stroke-width="0.6" stroke-linejoin="round"/><path d="M1 2.6 L5.2 3.8 L8.8 2 M5.2 3.8 L5.2 9.6" stroke="#5a93b8" stroke-width="0.5" fill="none"/><path d="M5.6 4 L8.4 2.6 L8.4 7.8 L5.6 9Z" fill="#e8f1f8"/><path d="M1.4 3 L4.8 4 L4.8 9 L1.4 8.1Z" fill="#5fa3cf"/></svg>
<svg class="r" style="left:434.2px;top:98px;" width="2.8" height="1.8" viewBox="0 0 2.8 1.8"><path d="M0 0h2.8l-1.4 1.7z" fill="#8a8a8a"/></svg>
<svg class="r" style="left:442px;top:93.2px;" width="10.4" height="10.4" viewBox="0 0 10 10"><path d="M0.8 5 Q4.8 0.8 9 5 Q4.8 8.6 0.8 5Z" fill="#e3e3e3" stroke="#8a8a8a" stroke-width="0.7"/><circle cx="4.9" cy="4.8" r="1.6" fill="#9d9d9d"/><path d="M4.9 1v8.6" stroke="#777" stroke-width="0.8"/></svg>
<svg class="r" style="left:455px;top:98px;" width="2.8" height="1.8" viewBox="0 0 2.8 1.8"><path d="M0 0h2.8l-1.4 1.7z" fill="#8a8a8a"/></svg>
<svg class="r" style="left:462.8px;top:93.2px;" width="10.4" height="10.4" viewBox="0 0 10 10"><circle cx="5" cy="5" r="4.5" fill="#4a7fd0"/><path d="M5 5 L0.6 4.2 A4.5 4.5 0 0 1 7.4 1.2Z" fill="#d8453a"/><path d="M5 5 L9.2 6.6 A4.5 4.5 0 0 1 2.4 8.7Z" fill="#e9c648"/><path d="M5 5 L2.4 8.7 A4.5 4.5 0 0 1 0.6 4.2Z" fill="#55ad48"/><circle cx="5" cy="5" r="4.5" fill="none" stroke="#6a7a88" stroke-width="0.4"/><ellipse cx="3.8" cy="3" rx="2" ry="1.2" fill="#fff" opacity="0.45"/><path d="M5.8 7.2 L8.8 4.6 L9.8 5.8 L6.8 8.6Z" fill="#e2b46a" stroke="#9a7434" stroke-width="0.4"/></svg>
<svg class="r" style="left:476px;top:93.2px;" width="10.4" height="10.4" viewBox="0 0 10 10"><g transform="translate(0.6,-0.6) scale(0.88)"><circle cx="5" cy="5" r="4.5" fill="#4a7fd0"/><path d="M5 5 L0.6 4.2 A4.5 4.5 0 0 1 7.4 1.2Z" fill="#d8453a"/><path d="M5 5 L9.2 6.6 A4.5 4.5 0 0 1 2.4 8.7Z" fill="#e9c648"/><path d="M5 5 L2.4 8.7 A4.5 4.5 0 0 1 0.6 4.2Z" fill="#55ad48"/><circle cx="5" cy="5" r="4.5" fill="none" stroke="#6a7a88" stroke-width="0.4"/><ellipse cx="3.8" cy="3" rx="2" ry="1.2" fill="#fff" opacity="0.45"/></g><path d="M0.4 7.8 L9.6 7.8 L9.6 9.8 L0.4 9.8Z" fill="#f4f4f4" stroke="#555" stroke-width="0.4"/><path d="M0.4 8.8h1.6v1H0.4zM3.4 8.8h1.6v1H3.4zM6.4 8.8h1.6v1H6.4zM1.9 7.8h1.6v1H1.9zM4.9 7.8h1.6v1H4.9zM7.9 7.8h1.6v1H7.9z" fill="#333"/></svg>
<svg class="r" style="left:490.5px;top:98px;" width="2.8" height="1.8" viewBox="0 0 2.8 1.8"><path d="M0 0h2.8l-1.4 1.7z" fill="#8a8a8a"/></svg>
<svg class="r" style="left:497.8px;top:93.2px;" width="10.4" height="10.4" viewBox="0 0 10 10"><rect x="0.6" y="1" width="8.8" height="6" rx="0.5" fill="#e6e6e6" stroke="#8d8d8d" stroke-width="0.8"/><path d="M5 7v1.6M3 9h4" stroke="#777" stroke-width="0.9"/></svg>
<svg class="r" style="left:511.7px;top:98px;" width="2.8" height="1.8" viewBox="0 0 2.8 1.8"><path d="M0 0h2.8l-1.4 1.7z" fill="#8a8a8a"/></svg>
<div class="r" style="left:704.5px;top:101.8px;width:13.7px;height:13.300000000000002px;background:#d6d6d6;border:0.6px solid #a9a9a9;box-sizing:border-box"></div>
<div class="r" style="left:704.5px;top:114.5px;width:13.7px;height:13.399999999999997px;background:#d6d6d6;border:0.6px solid #a9a9a9;box-sizing:border-box"></div>
<div class="r" style="left:704.5px;top:127.3px;width:13.7px;height:13.899999999999997px;background:#d6d6d6;border:0.6px solid #a9a9a9;box-sizing:border-box"></div>
<div class="r" style="left:704.5px;top:140.6px;width:13.7px;height:13.400000000000011px;background:#d6d6d6;border:0.6px solid #a9a9a9;box-sizing:border-box"></div>
<div class="r" style="left:704.5px;top:153.4px;width:13.7px;height:13.399999999999983px;background:#d6d6d6;border:0.6px solid #a9a9a9;box-sizing:border-box"></div>
<div class="r" style="left:704.5px;top:166.2px;width:13.7px;height:12.900000000000011px;background:#d6d6d6;border:0.6px solid #a9a9a9;box-sizing:border-box"></div>
<div class="r" style="left:704.5px;top:178.5px;width:13.7px;height:13.500000000000005px;background:#fbfbfb;border:0.6px solid #a9a9a9;box-sizing:border-box"></div>
<svg class="r" style="left:706.4px;top:103.39999999999999px;" width="10" height="10" viewBox="0 0 10 10"><path d="M1.8 5.2 L1.8 9.4 L8.2 9.4 L8.2 5.2" fill="#fff" stroke="#666" stroke-width="0.7"/><path d="M0.5 5.6 L5 1 L9.5 5.6" fill="none" stroke="#2f6ea5" stroke-width="1.6"/><rect x="4" y="6.2" width="2" height="3.2" fill="#fff" stroke="#666" stroke-width="0.5"/></svg>
<svg class="r" style="left:706.4px;top:116.1px;" width="10" height="10" viewBox="0 0 10 10"><path d="M1.4 3 L5 4.2 L8.6 3 L8.6 8.4 L5 9.6 L1.4 8.4Z" fill="#f2f2f2" stroke="#555" stroke-width="0.7" stroke-linejoin="round"/><path d="M5 4.2v5.4" stroke="#555" stroke-width="0.6"/><path d="M1.4 3 L3.2 0.8 L5 2.4 L6.8 0.8 L8.6 3" fill="#fff" stroke="#555" stroke-width="0.7" stroke-linejoin="round"/></svg>
<svg class="r" style="left:706.4px;top:128.9px;" width="10" height="10" viewBox="0 0 10 10"><path d="M0.8 1.6 L3.6 1.6 L4.4 2.6 L8 2.6 L8 4" fill="none" stroke="#555" stroke-width="0.8"/><path d="M0.8 1.6 L0.8 9 L7.6 9 L9.6 4 L2.6 4 L0.8 9" fill="#fafafa" stroke="#555" stroke-width="0.8" stroke-linejoin="round"/></svg>
<svg class="r" style="left:706.4px;top:142.2px;" width="10" height="10" viewBox="0 0 10 10"><rect x="0.8" y="1.4" width="8.4" height="7.6" fill="#e8d8a0" stroke="#6a5a20" stroke-width="0.6"/><path d="M0.8 3.6h8.4M0.8 6.6h8.4M3.4 1.4v7.6M6.6 1.4v7.6" stroke="#7a6a30" stroke-width="0.4"/><rect x="3.6" y="3.8" width="2.8" height="2.6" fill="#e9b91c"/><path d="M2.4 8.8 L5 5.4 L7.6 8.8Z" fill="#fff" stroke="#7a6a30" stroke-width="0.4"/></svg>
<svg class="r" style="left:706.4px;top:155.0px;" width="10" height="10" viewBox="0 0 10 10"><circle cx="5" cy="5" r="4.4" fill="#3f7fd6"/><path d="M5 5 L0.7 4.2 A4.4 4.4 0 0 1 7.6 1.4Z" fill="#dc3a2e"/><path d="M5 5 L9.2 6.4 A4.4 4.4 0 0 1 2.6 8.7Z" fill="#eec23a"/><path d="M5 5 L2.6 8.7 A4.4 4.4 0 0 1 0.7 4.2Z" fill="#4fae42"/><circle cx="5" cy="5" r="4.4" fill="none" stroke="#555" stroke-width="0.4"/></svg>
<svg class="r" style="left:706.4px;top:167.79999999999998px;" width="10" height="10" viewBox="0 0 10 10"><rect x="0.8" y="0.8" width="8.4" height="8.6" fill="#f4f7fa" stroke="#4a6a86" stroke-width="0.7"/><rect x="0.8" y="0.8" width="8.4" height="1.8" fill="#4a7fae"/><path d="M3.6 3.8h4.8M3.6 5.6h4.8M3.6 7.4h4.8" stroke="#4a6a86" stroke-width="0.8"/><rect x="1.6" y="3.3" width="1.2" height="1" fill="#2f7fc0"/><rect x="1.6" y="5.1" width="1.2" height="1" fill="#2f7fc0"/><rect x="1.6" y="6.9" width="1.2" height="1" fill="#2f7fc0"/></svg>
<svg class="r" style="left:706.4px;top:180.1px;" width="10" height="10" viewBox="0 0 10 10"><circle cx="5" cy="5" r="4.6" fill="#0f3f74"/><path d="M1.2 3 Q5 -0.6 8.8 3 Q5 5 1.2 3Z" fill="#3d7fc0" opacity="0.8"/><path d="M4 3.4 L7 5 L4 6.6Z" fill="none" stroke="#e8f0f8" stroke-width="0.6"/><circle cx="5" cy="5" r="4.6" fill="none" stroke="#0a2a50" stroke-width="0.4"/></svg>
<svg class="r" style="left:140px;top:498px;" width="40" height="36" viewBox="0 0 40 36"><path d="M15.1 24.7 L8.6 28.6" stroke="#1414c8" stroke-width="2.2"/><path d="M6.6 29.8 L11.6 28.6 L9.6 25.4Z" fill="#1414c8"/><path d="M15.1 24.7 L24.6 25.6" stroke="#c81414" stroke-width="2.2"/><path d="M24 23.6 L29.9 26 L23.8 28.2Z" fill="#c81414"/><path d="M15.1 25.4 L15.1 14" stroke="#14c814" stroke-width="2.8"/><path d="M12.6 14.8 L15.1 9.6 L17.6 14.8Z" fill="#14c814"/></svg>
<span class="t" style="left:154.00px;top:499.90px;font-size:4.5px;line-height:5.4px;color:#22c022;">Y</span>
<span class="t" style="left:172.20px;top:519.80px;font-size:5px;line-height:6.0px;color:#e03030;">x</span>
<span class="t" style="left:139.90px;top:543.90px;font-size:8px;line-height:9.6px;color:#111;font-weight:bold;transform:scaleX(0.894);">*Dimetric</span>
<svg width="0" height="0" style="position:absolute"><defs>
<symbol id="asm" viewBox="2 0.4 18 21.2" preserveAspectRatio="none"><path d="M3.2 5.2 L11 1.6 L18.8 5.2 L18.8 16 L11 20.4 L3.2 16 Z" fill="#ededed" stroke="#414141" stroke-width="2" stroke-linejoin="round"/>
<path d="M3.8 14 L11 17.5 L18.2 14 L18.2 16 L11 19.6 L3.8 16Z" fill="#bdbdbd"/>
<path d="M5.2 6 L11 3.2 L16.8 6 L16.8 11.6 L11 14.6 L5.2 11.6 Z" fill="#2483bd"/><path d="M5.2 6 L11 3.2 L16.8 6 L11 8.8Z" fill="#62b8e4"/><path d="M11 8.8 L16.8 6 L16.8 11.6 L11 14.6Z" fill="#3c9bd2"/></symbol>
<symbol id="prt" viewBox="1.6 1.4 18.8 20" preserveAspectRatio="none"><path d="M2.6 5.6 L7.8 2.4 L12.6 5 L12.6 9.6 L19.4 12.6 L19.4 17 L12 20.4 L2.6 15.2 Z" fill="#1f7db6" stroke="#1a5f8d" stroke-width="1.6" stroke-linejoin="round"/>
<path d="M3.4 5.9 L7.8 3.3 L11.8 5.4 L7.4 8.1Z" fill="#56ade0"/><path d="M8.2 12.6 L12.6 10.4 L18.4 13 L13.4 15.6Z" fill="#78c8ee"/><path d="M7.4 8.1 L7.4 12.4 L12.8 15.6 L12.8 19.4" fill="none" stroke="#155a88" stroke-width="1.3"/></symbol>
<symbol id="sto" viewBox="3 2 20 21"><path d="M3 4.5 C3 1.2 15 1.2 15 4.5 L15 17.5 C15 20.8 3 20.8 3 17.5Z" fill="#c6c6c6"/><path d="M3 8.4 C5 10.8 13 10.8 15 8.4 M3 12.8 C5 15.2 13 15.2 15 12.8" stroke="#f4f4f4" stroke-width="1.3" fill="none"/>
<rect x="8.6" y="9.4" width="14" height="13.4" rx="1.2" fill="#f28a1c"/><rect x="12.4" y="9.8" width="6.4" height="3.2" fill="#f8c182"/><rect x="11.6" y="16.6" width="8" height="4.8" fill="#fff"/></symbol>
<symbol id="stg" viewBox="3 2 20 21"><path d="M3 4.5 C3 1.2 15 1.2 15 4.5 L15 17.5 C15 20.8 3 20.8 3 17.5Z" fill="#c6c6c6"/><path d="M3 8.4 C5 10.8 13 10.8 15 8.4 M3 12.8 C5 15.2 13 15.2 15 12.8" stroke="#f4f4f4" stroke-width="1.3" fill="none"/>
<path d="M8 16.5 L12.6 21 L22 11.6" fill="none" stroke="#fff" stroke-width="5"/><path d="M8.4 16.6 L12.6 20.6 L21.6 12" fill="none" stroke="#43a838" stroke-width="2.6"/></symbol>
<symbol id="lck" viewBox="1 2.6 18 20"><rect x="1" y="12" width="13.6" height="10.6" rx="1" fill="#bdbdbd"/><path d="M10 12 L10 6.4 C10 1.6 17.8 1.6 17.8 6.4 L17.8 9" fill="none" stroke="#bdbdbd" stroke-width="2.4"/><rect x="6.6" y="15" width="2.4" height="4.6" fill="#fff"/></symbol>
</defs></svg>
<div class="r" style="left:718.7px;top:73.5px;width:305.3px;height:492.1px;background:#f9f9f9;"></div>
<div class="r" style="left:718.7px;top:564.3px;width:305.3px;height:1.3px;background:#c9c9c9;"></div>
<div class="r" style="left:722px;top:76px;width:302px;height:23px;background:#005686;"></div>
<div class="r" style="left:722px;top:99px;width:302px;height:16.7px;background:#f5f5f5;"></div>
<div class="r" style="left:722px;top:115.7px;width:292px;height:441px;background:#fff;"></div>
<span class="t" style="left:750.50px;top:82.20px;font-size:8.5px;line-height:10.2px;color:#fff;transform:scaleX(1.015);">MySession - SQR_ (D...</span>
<div class="r" style="left:859.2px;top:79.7px;width:117.2px;height:15.6px;background:#fff;border-radius:2px"></div>
<span class="t" style="left:865.40px;top:82.60px;font-size:8px;line-height:9.6px;color:#c9c9c9;transform:scaleX(0.929);">Search Demo Tenant</span>
<svg class="r" style="left:847.2px;top:85.4px;" width="8" height="5" viewBox="0 0 8 5"><path d="M0.8 0.8 L4 4 L7.2 0.8" fill="none" stroke="#fff" stroke-width="1.4"/></svg>
<svg class="r" style="left:944.4px;top:81px;" width="14" height="14" viewBox="0 0 14 14"><circle cx="5.6" cy="5.6" r="4" fill="none" stroke="#8a8a8a" stroke-width="1.1"/><path d="M8.6 8.6 L12.4 12.4" stroke="#8a8a8a" stroke-width="1.3"/></svg>
<svg class="r" style="left:963px;top:86px;" width="7" height="4" viewBox="0 0 7 4"><path d="M0.6 0.6 L3.5 3.3 L6.4 0.6" fill="none" stroke="#777" stroke-width="1"/></svg>
<svg class="r" style="left:982.3px;top:81px;" width="13" height="13" viewBox="0 0 13 13"><path d="M1.2 1.6 L6.2 1.2 L11.8 7 L7 11.8 L1.4 6.2 Z" fill="none" stroke="#fff" stroke-width="1.5" stroke-linejoin="round"/><circle cx="4" cy="4" r="1" fill="#fff"/></svg>
<div class="r" style="left:1007.3px;top:82.6px;width:9px;height:1.6px;background:#fff;"></div>
<div class="r" style="left:1007.3px;top:86.39999999999999px;width:9px;height:1.6px;background:#fff;"></div>
<div class="r" style="left:1007.3px;top:90.19999999999999px;width:9px;height:1.6px;background:#fff;"></div>
<svg class="r" style="left:724.5px;top:77px;" width="24" height="21.4" viewBox="0 0 24 21.4"><defs><radialGradient id="sg" cx="0.45" cy="0.3" r="0.75"><stop offset="0" stop-color="#3f86b8"/><stop offset="0.55" stop-color="#0f4f7c"/><stop offset="1" stop-color="#07324f"/></radialGradient></defs><circle cx="13.4" cy="10.7" r="9.9" fill="url(#sg)"/><path d="M6 5.2 Q13.4 -1.4 20.8 5.2 Q13.4 8.4 6 5.2Z" fill="#7fb4d8" opacity="0.45"/><path d="M11.6 8.4 L16 10.8 L11.6 13.2Z" fill="none" stroke="#d6e6f2" stroke-width="0.8"/><path d="M13.4 3.4v1.6M13.4 16.4v1.6M6.4 10.7h1.6M18.8 10.7h1.6" stroke="#c4dcec" stroke-width="0.7"/><rect x="0" y="4.6" width="3" height="1.2" fill="#fff"/><rect x="0" y="8" width="3" height="1.2" fill="#fff"/><rect x="0" y="11.4" width="3" height="1.2" fill="#fff"/><rect x="0" y="14.8" width="3" height="1.2" fill="#fff"/></svg>
<span class="t" style="left:725.50px;top:102.70px;font-size:7.5px;line-height:9.0px;color:#555;">Component Name</span>
<span class="t" style="left:876.50px;top:102.70px;font-size:7.5px;line-height:9.0px;color:#555;transform:scaleX(1.035);">Status</span>
<span class="t" style="left:930.00px;top:102.70px;font-size:7.5px;line-height:9.0px;color:#555;transform:scaleX(1.012);">Rev</span>
<span class="t" style="left:951.50px;top:102.70px;font-size:7.5px;line-height:9.0px;color:#555;transform:scaleX(0.910);">Is...</span>
<span class="t" style="left:970.50px;top:102.70px;font-size:7.5px;line-height:9.0px;color:#555;transform:scaleX(0.994);">Maturity State</span>
<div class="r" style="left:871.5px;top:100px;width:1px;height:15px;background:#fbfbfb;"></div>
<div class="r" style="left:906.5px;top:100px;width:1px;height:15px;background:#fbfbfb;"></div>
<div class="r" style="left:926.5px;top:100px;width:1px;height:15px;background:#fbfbfb;"></div>
<div class="r" style="left:948.5px;top:100px;width:1px;height:15px;background:#fbfbfb;"></div>
<div class="r" style="left:966.5px;top:100px;width:1px;height:15px;background:#fbfbfb;"></div>
<div class="r" style="left:747.0px;top:140.468px;width:0.8px;height:402.172px;background:#e6e6e6;"></div>
<div class="r" style="left:760.4px;top:154.33599999999998px;width:0.8px;height:388.304px;background:#e6e6e6;"></div>
<div class="r" style="left:773.7px;top:168.204px;width:0.8px;height:374.436px;background:#e6e6e6;"></div>
<div class="r" style="left:787.1px;top:169.204px;width:0.8px;height:119.81199999999995px;background:#e6e6e6;"></div>
<div class="r" style="left:787.1px;top:307.884px;width:0.8px;height:78.20799999999997px;background:#e6e6e6;"></div>
<div class="r" style="left:787.1px;top:418.828px;width:0.8px;height:8.868000000000052px;background:#e6e6e6;"></div>
<div class="r" style="left:722px;top:129.534px;width:292px;height:0.6px;background:#f5f5f5;"></div>
<div class="r" style="left:729.5px;top:118.89999999999999px;width:7.6px;height:7.4px;background:#fdfdfd;border:0.7px solid #d2d2d2;box-sizing:border-box"></div>
<div class="r" style="left:731.7px;top:122.1px;width:3.2px;height:1px;background:#444;"></div>
<svg class="r" style="left:742.80px;top:117.10px" width="11" height="11"><use href="#asm"/></svg>
<span class="t" style="left:759.90px;top:118.64px;font-size:6.93px;line-height:8.32px;color:#3a3a3a;">02881_ (Default)</span>
<svg class="r" style="left:884.90px;top:116.70px" width="11.1" height="11.6"><use href="#sto"/></svg>
<div class="r" style="left:722px;top:143.402px;width:292px;height:0.6px;background:#f5f5f5;"></div>
<div class="r" style="left:742.85px;top:132.768px;width:7.6px;height:7.4px;background:#fdfdfd;border:0.7px solid #d2d2d2;box-sizing:border-box"></div>
<div class="r" style="left:745.0500000000001px;top:135.968px;width:3.2px;height:1px;background:#444;"></div>
<svg class="r" style="left:756.15px;top:130.97px" width="11" height="11"><use href="#asm"/></svg>
<span class="t" style="left:773.25px;top:132.51px;font-size:6.93px;line-height:8.32px;color:#3a3a3a;">02879_&lt;1&gt; (Default)</span>
<svg class="r" style="left:884.90px;top:130.57px" width="11.1" height="11.6"><use href="#sto"/></svg>
<div class="r" style="left:722px;top:157.26999999999998px;width:292px;height:0.6px;background:#f5f5f5;"></div>
<div class="r" style="left:756.2px;top:146.636px;width:7.6px;height:7.4px;background:#fdfdfd;border:0.7px solid #d2d2d2;box-sizing:border-box"></div>
<div class="r" style="left:758.4000000000001px;top:149.83599999999998px;width:3.2px;height:1px;background:#444;"></div>
<svg class="r" style="left:769.50px;top:144.84px" width="11" height="11"><use href="#asm"/></svg>
<span class="t" style="left:786.60px;top:146.38px;font-size:6.93px;line-height:8.32px;color:#3a3a3a;">02877_&lt;1&gt; (Default)</span>
<svg class="r" style="left:884.90px;top:144.44px" width="11.1" height="11.6"><use href="#sto"/></svg>
<div class="r" style="left:722px;top:171.138px;width:292px;height:0.6px;background:#f5f5f5;"></div>
<div class="r" style="left:769.55px;top:160.50400000000002px;width:7.6px;height:7.4px;background:#fdfdfd;border:0.7px solid #d2d2d2;box-sizing:border-box"></div>
<div class="r" style="left:771.75px;top:163.704px;width:3.2px;height:1px;background:#444;"></div>
<svg class="r" style="left:782.85px;top:158.70px" width="11" height="11"><use href="#asm"/></svg>
<span class="t" style="left:799.95px;top:160.24px;font-size:6.93px;line-height:8.32px;color:#3a3a3a;">01191_&lt;1&gt; (Default)</span>
<svg class="r" style="left:884.90px;top:158.30px" width="11.1" height="11.6"><use href="#sto"/></svg>
<div class="r" style="left:722px;top:185.006px;width:292px;height:0.6px;background:#f5f5f5;"></div>
<div class="r" style="left:787.2px;top:178.072px;width:5px;height:0.7px;background:#e6e6e6;"></div>
<svg class="r" style="left:796.70px;top:172.57px" width="11" height="11"><use href="#prt"/></svg>
<span class="t" style="left:813.80px;top:174.11px;font-size:6.93px;line-height:8.32px;color:#3a3a3a;">01190_&lt;1&gt; (-01...</span>
<svg class="r" style="left:884.90px;top:172.17px" width="11.1" height="11.6"><use href="#sto"/></svg>
<div class="r" style="left:722px;top:198.874px;width:292px;height:0.6px;background:#f5f5f5;"></div>
<div class="r" style="left:787.2px;top:191.94px;width:5px;height:0.7px;background:#e6e6e6;"></div>
<svg class="r" style="left:796.70px;top:186.44px" width="11" height="11"><use href="#prt"/></svg>
<span class="t" style="left:813.80px;top:187.98px;font-size:6.93px;line-height:8.32px;color:#3a3a3a;">PIN, DOWEL, 5...</span>
<svg class="r" style="left:884.90px;top:186.04px" width="11.1" height="11.6"><use href="#sto"/></svg>
<div class="r" style="left:722px;top:212.742px;width:292px;height:0.6px;background:#f5f5f5;"></div>
<div class="r" style="left:787.2px;top:205.808px;width:5px;height:0.7px;background:#e6e6e6;"></div>
<svg class="r" style="left:796.70px;top:200.31px" width="11" height="11"><use href="#prt"/></svg>
<span class="t" style="left:813.80px;top:201.85px;font-size:6.93px;line-height:8.32px;color:#3a3a3a;">PIN, DOWEL, 5...</span>
<svg class="r" style="left:884.90px;top:199.91px" width="11.1" height="11.6"><use href="#sto"/></svg>
<div class="r" style="left:722px;top:226.60999999999999px;width:292px;height:0.6px;background:#f5f5f5;"></div>
<div class="r" style="left:787.2px;top:219.676px;width:5px;height:0.7px;background:#e6e6e6;"></div>
<svg class="r" style="left:796.70px;top:214.18px" width="11" height="11"><use href="#prt"/></svg>
<span class="t" style="left:813.80px;top:215.72px;font-size:6.93px;line-height:8.32px;color:#3a3a3a;">PIN, DOWEL, 5...</span>
<svg class="r" style="left:884.90px;top:213.78px" width="11.1" height="11.6"><use href="#sto"/></svg>
<div class="r" style="left:722px;top:240.47799999999998px;width:292px;height:0.6px;background:#f5f5f5;"></div>
<div class="r" style="left:787.2px;top:233.54399999999998px;width:5px;height:0.7px;background:#e6e6e6;"></div>
<svg class="r" style="left:796.70px;top:228.04px" width="11" height="11"><use href="#prt"/></svg>
<span class="t" style="left:813.80px;top:229.58px;font-size:6.93px;line-height:8.32px;color:#3a3a3a;">PIN, DOWEL, 5...</span>
<svg class="r" style="left:884.90px;top:227.64px" width="11.1" height="11.6"><use href="#sto"/></svg>
<div class="r" style="left:722px;top:254.34599999999998px;width:292px;height:0.6px;background:#f5f5f5;"></div>
<div class="r" style="left:787.2px;top:247.41199999999998px;width:5px;height:0.7px;background:#e6e6e6;"></div>
<svg class="r" style="left:796.70px;top:241.91px" width="11" height="11"><use href="#prt"/></svg>
<span class="t" style="left:813.80px;top:243.45px;font-size:6.93px;line-height:8.32px;color:#3a3a3a;">INSERT, THRE...</span>
<svg class="r" style="left:884.90px;top:241.51px" width="11.1" height="11.6"><use href="#stg"/></svg>
<svg class="r" style="left:912.60px;top:241.41px" width="8.6" height="10.8"><use href="#lck"/></svg>
<span class="t" style="left:933.20px;top:243.45px;font-size:6.93px;line-height:8.32px;color:#3a3a3a;">A.1</span>
<span class="t" style="left:971.00px;top:243.45px;font-size:6.93px;line-height:8.32px;color:#3a3a3a;">Released</span>
<div class="r" style="left:722px;top:268.214px;width:292px;height:0.6px;background:#f5f5f5;"></div>
<div class="r" style="left:787.2px;top:261.28px;width:5px;height:0.7px;background:#e6e6e6;"></div>
<svg class="r" style="left:796.70px;top:255.78px" width="11" height="11"><use href="#prt"/></svg>
<span class="t" style="left:813.80px;top:257.32px;font-size:6.93px;line-height:8.32px;color:#3a3a3a;">INSERT, THRE...</span>
<svg class="r" style="left:884.90px;top:255.38px" width="11.1" height="11.6"><use href="#stg"/></svg>
<svg class="r" style="left:912.60px;top:255.28px" width="8.6" height="10.8"><use href="#lck"/></svg>
<span class="t" style="left:933.20px;top:257.32px;font-size:6.93px;line-height:8.32px;color:#3a3a3a;">A.1</span>
<span class="t" style="left:971.00px;top:257.32px;font-size:6.93px;line-height:8.32px;color:#3a3a3a;">Released</span>
<div class="r" style="left:722px;top:282.08200000000005px;width:292px;height:0.6px;background:#f5f5f5;"></div>
<div class="r" style="left:787.2px;top:275.148px;width:5px;height:0.7px;background:#e6e6e6;"></div>
<svg class="r" style="left:796.70px;top:269.65px" width="11" height="11"><use href="#prt"/></svg>
<span class="t" style="left:813.80px;top:271.19px;font-size:6.93px;line-height:8.32px;color:#3a3a3a;">INSERT, THRE...</span>
<svg class="r" style="left:884.90px;top:269.25px" width="11.1" height="11.6"><use href="#stg"/></svg>
<svg class="r" style="left:912.60px;top:269.15px" width="8.6" height="10.8"><use href="#lck"/></svg>
<span class="t" style="left:933.20px;top:271.19px;font-size:6.93px;line-height:8.32px;color:#3a3a3a;">A.1</span>
<span class="t" style="left:971.00px;top:271.19px;font-size:6.93px;line-height:8.32px;color:#3a3a3a;">Released</span>
<div class="r" style="left:722px;top:295.95px;width:292px;height:0.6px;background:#f5f5f5;"></div>
<div class="r" style="left:787.2px;top:289.01599999999996px;width:5px;height:0.7px;background:#e6e6e6;"></div>
<svg class="r" style="left:796.70px;top:283.52px" width="11" height="11"><use href="#prt"/></svg>
<span class="t" style="left:813.80px;top:285.06px;font-size:6.93px;line-height:8.32px;color:#3a3a3a;">INSERT, THRE...</span>
<svg class="r" style="left:884.90px;top:283.12px" width="11.1" height="11.6"><use href="#stg"/></svg>
<svg class="r" style="left:912.60px;top:283.02px" width="8.6" height="10.8"><use href="#lck"/></svg>
<span class="t" style="left:933.20px;top:285.06px;font-size:6.93px;line-height:8.32px;color:#3a3a3a;">A.1</span>
<span class="t" style="left:971.00px;top:285.06px;font-size:6.93px;line-height:8.32px;color:#3a3a3a;">Released</span>
<div class="r" style="left:722px;top:309.81800000000004px;width:292px;height:0.6px;background:#f5f5f5;"></div>
<div class="r" style="left:769.55px;top:299.184px;width:7.6px;height:7.4px;background:#fdfdfd;border:0.7px solid #d2d2d2;box-sizing:border-box"></div>
<div class="r" style="left:771.75px;top:302.384px;width:3.2px;height:1px;background:#444;"></div>
<svg class="r" style="left:782.85px;top:297.38px" width="11" height="11"><use href="#asm"/></svg>
<span class="t" style="left:799.95px;top:298.92px;font-size:6.93px;line-height:8.32px;color:#3a3a3a;">00474_&lt;1&gt; (0.2925 ...</span>
<svg class="r" style="left:884.90px;top:296.98px" width="11.1" height="11.6"><use href="#sto"/></svg>
<div class="r" style="left:722px;top:323.68600000000004px;width:292px;height:0.6px;background:#f5f5f5;"></div>
<div class="r" style="left:787.2px;top:316.752px;width:5px;height:0.7px;background:#e6e6e6;"></div>
<svg class="r" style="left:796.70px;top:311.25px" width="11" height="11"><use href="#prt"/></svg>
<span class="t" style="left:813.80px;top:312.79px;font-size:6.93px;line-height:8.32px;color:#3a3a3a;">ST SPBF Body_...</span>
<svg class="r" style="left:884.90px;top:310.85px" width="11.1" height="11.6"><use href="#sto"/></svg>
<div class="r" style="left:722px;top:337.55400000000003px;width:292px;height:0.6px;background:#f5f5f5;"></div>
<div class="r" style="left:787.2px;top:330.62px;width:5px;height:0.7px;background:#e6e6e6;"></div>
<svg class="r" style="left:796.70px;top:325.12px" width="11" height="11"><use href="#prt"/></svg>
<span class="t" style="left:813.80px;top:326.66px;font-size:6.93px;line-height:8.32px;color:#3a3a3a;">Shake Proof Wa...</span>
<svg class="r" style="left:884.90px;top:324.72px" width="11.1" height="11.6"><use href="#sto"/></svg>
<div class="r" style="left:722px;top:351.422px;width:292px;height:0.6px;background:#f5f5f5;"></div>
<div class="r" style="left:787.2px;top:344.488px;width:5px;height:0.7px;background:#e6e6e6;"></div>
<svg class="r" style="left:796.70px;top:338.99px" width="11" height="11"><use href="#prt"/></svg>
<span class="t" style="left:813.80px;top:340.53px;font-size:6.93px;line-height:8.32px;color:#3a3a3a;">Hex Nut_501-00...</span>
<svg class="r" style="left:884.90px;top:338.59px" width="11.1" height="11.6"><use href="#sto"/></svg>
<div class="r" style="left:722px;top:365.29px;width:292px;height:0.6px;background:#f5f5f5;"></div>
<div class="r" style="left:787.2px;top:358.356px;width:5px;height:0.7px;background:#e6e6e6;"></div>
<svg class="r" style="left:796.70px;top:352.86px" width="11" height="11"><use href="#prt"/></svg>
<span class="t" style="left:813.80px;top:354.40px;font-size:6.93px;line-height:8.32px;color:#3a3a3a;">O-Ring 01_501-...</span>
<svg class="r" style="left:884.90px;top:352.46px" width="11.1" height="11.6"><use href="#sto"/></svg>
<div class="r" style="left:722px;top:379.158px;width:292px;height:0.6px;background:#f5f5f5;"></div>
<div class="r" style="left:787.2px;top:372.224px;width:5px;height:0.7px;background:#e6e6e6;"></div>
<svg class="r" style="left:796.70px;top:366.72px" width="11" height="11"><use href="#prt"/></svg>
<span class="t" style="left:813.80px;top:368.26px;font-size:6.93px;line-height:8.32px;color:#3a3a3a;">O-RING, 501-00...</span>
<svg class="r" style="left:884.90px;top:366.32px" width="11.1" height="11.6"><use href="#sto"/></svg>
<div class="r" style="left:722px;top:393.026px;width:292px;height:0.6px;background:#f5f5f5;"></div>
<div class="r" style="left:787.2px;top:386.092px;width:5px;height:0.7px;background:#e6e6e6;"></div>
<svg class="r" style="left:796.70px;top:380.59px" width="11" height="11"><use href="#prt"/></svg>
<span class="t" style="left:813.80px;top:382.13px;font-size:6.93px;line-height:8.32px;color:#3a3a3a;">O-RING, 501-00...</span>
<svg class="r" style="left:884.90px;top:380.19px" width="11.1" height="11.6"><use href="#sto"/></svg>
<div class="r" style="left:722px;top:406.89400000000006px;width:292px;height:0.6px;background:#f5f5f5;"></div>
<div class="r" style="left:773.9px;top:399.96000000000004px;width:5px;height:0.7px;background:#e6e6e6;"></div>
<svg class="r" style="left:783.40px;top:394.46px" width="11" height="11"><use href="#prt"/></svg>
<span class="t" style="left:800.50px;top:396.00px;font-size:6.93px;line-height:8.32px;color:#3a3a3a;">00475_&lt;1&gt; (Default)</span>
<svg class="r" style="left:884.90px;top:394.06px" width="11.1" height="11.6"><use href="#sto"/></svg>
<div class="r" style="left:722px;top:420.762px;width:292px;height:0.6px;background:#f5f5f5;"></div>
<div class="r" style="left:769.55px;top:410.128px;width:7.6px;height:7.4px;background:#fdfdfd;border:0.7px solid #d2d2d2;box-sizing:border-box"></div>
<div class="r" style="left:771.75px;top:413.328px;width:3.2px;height:1px;background:#444;"></div>
<svg class="r" style="left:782.85px;top:408.33px" width="11" height="11"><use href="#asm"/></svg>
<span class="t" style="left:799.95px;top:409.87px;font-size:6.93px;line-height:8.32px;color:#3a3a3a;">3O-FR (1)_&lt;1&gt; (Def...</span>
<svg class="r" style="left:884.90px;top:407.93px" width="11.1" height="11.6"><use href="#sto"/></svg>
<div class="r" style="left:722px;top:434.63000000000005px;width:292px;height:0.6px;background:#f5f5f5;"></div>
<div class="r" style="left:787.2px;top:427.696px;width:5px;height:0.7px;background:#e6e6e6;"></div>
<svg class="r" style="left:796.70px;top:422.20px" width="11" height="11"><use href="#prt"/></svg>
<span class="t" style="left:813.80px;top:423.74px;font-size:6.93px;line-height:8.32px;color:#3a3a3a;">24E-207_&lt;1&gt; (...</span>
<svg class="r" style="left:884.90px;top:421.80px" width="11.1" height="11.6"><use href="#sto"/></svg>
<div class="r" style="left:722px;top:448.498px;width:292px;height:0.6px;background:#f5f5f5;"></div>
<div class="r" style="left:773.9px;top:441.56399999999996px;width:5px;height:0.7px;background:#e6e6e6;"></div>
<svg class="r" style="left:783.40px;top:436.06px" width="11" height="11"><use href="#prt"/></svg>
<span class="t" style="left:800.50px;top:437.60px;font-size:6.93px;line-height:8.32px;color:#3a3a3a;">WASHER, SPLIT LO...</span>
<svg class="r" style="left:884.90px;top:435.66px" width="11.1" height="11.6"><use href="#sto"/></svg>
<div class="r" style="left:722px;top:462.36600000000004px;width:292px;height:0.6px;background:#f5f5f5;"></div>
<div class="r" style="left:773.9px;top:455.432px;width:5px;height:0.7px;background:#e6e6e6;"></div>
<svg class="r" style="left:783.40px;top:449.93px" width="11" height="11"><use href="#prt"/></svg>
<span class="t" style="left:800.50px;top:451.47px;font-size:6.93px;line-height:8.32px;color:#3a3a3a;">SCREW, SHCS, .19...</span>
<svg class="r" style="left:884.90px;top:449.53px" width="11.1" height="11.6"><use href="#sto"/></svg>
<div class="r" style="left:722px;top:476.234px;width:292px;height:0.6px;background:#f5f5f5;"></div>
<div class="r" style="left:773.9px;top:469.29999999999995px;width:5px;height:0.7px;background:#e6e6e6;"></div>
<svg class="r" style="left:783.40px;top:463.80px" width="11" height="11"><use href="#prt"/></svg>
<span class="t" style="left:800.50px;top:465.34px;font-size:6.93px;line-height:8.32px;color:#3a3a3a;">00455_&lt;1&gt; (Default)</span>
<svg class="r" style="left:884.90px;top:463.40px" width="11.1" height="11.6"><use href="#sto"/></svg>
<div class="r" style="left:722px;top:490.10200000000003px;width:292px;height:0.6px;background:#f5f5f5;"></div>
<div class="r" style="left:773.9px;top:483.168px;width:5px;height:0.7px;background:#e6e6e6;"></div>
<svg class="r" style="left:783.40px;top:477.67px" width="11" height="11"><use href="#prt"/></svg>
<span class="t" style="left:800.50px;top:479.21px;font-size:6.93px;line-height:8.32px;color:#3a3a3a;">O-RING, 2-020_&lt;1&gt; ...</span>
<svg class="r" style="left:884.90px;top:477.27px" width="11.1" height="11.6"><use href="#sto"/></svg>
<div class="r" style="left:722px;top:503.9700000000001px;width:292px;height:0.6px;background:#f5f5f5;"></div>
<div class="r" style="left:773.9px;top:497.03600000000006px;width:5px;height:0.7px;background:#e6e6e6;"></div>
<svg class="r" style="left:783.40px;top:491.54px" width="11" height="11"><use href="#prt"/></svg>
<span class="t" style="left:800.50px;top:493.08px;font-size:6.93px;line-height:8.32px;color:#3a3a3a;">O-RING, 2-024_&lt;1&gt; ...</span>
<svg class="r" style="left:884.90px;top:491.14px" width="11.1" height="11.6"><use href="#sto"/></svg>
<div class="r" style="left:722px;top:517.838px;width:292px;height:0.6px;background:#f5f5f5;"></div>
<div class="r" style="left:773.9px;top:510.904px;width:5px;height:0.7px;background:#e6e6e6;"></div>
<svg class="r" style="left:783.40px;top:505.40px" width="11" height="11"><use href="#prt"/></svg>
<span class="t" style="left:800.50px;top:506.94px;font-size:6.93px;line-height:8.32px;color:#3a3a3a;">02538_&lt;1&gt; (Default)</span>
<svg class="r" style="left:884.90px;top:505.00px" width="11.1" height="11.6"><use href="#sto"/></svg>
<div class="r" style="left:722px;top:531.706px;width:292px;height:0.6px;background:#f5f5f5;"></div>
<div class="r" style="left:773.9px;top:524.772px;width:5px;height:0.7px;background:#e6e6e6;"></div>
<svg class="r" style="left:783.40px;top:519.27px" width="11" height="11"><use href="#prt"/></svg>
<span class="t" style="left:800.50px;top:520.81px;font-size:6.93px;line-height:8.32px;color:#3a3a3a;">O-RING, 3-904_&lt;1&gt; ...</span>
<svg class="r" style="left:884.90px;top:518.87px" width="11.1" height="11.6"><use href="#sto"/></svg>
<div class="r" style="left:722px;top:545.574px;width:292px;height:0.6px;background:#f5f5f5;"></div>
<div class="r" style="left:773.9px;top:538.64px;width:5px;height:0.7px;background:#e6e6e6;"></div>
<svg class="r" style="left:783.40px;top:533.14px" width="11" height="11"><use href="#prt"/></svg>
<svg class="r" style="left:884.90px;top:532.74px" width="11.1" height="11.6"><use href="#sto"/></svg>
<div class="r" style="left:1014px;top:115.7px;width:10px;height:441px;background:#f1f1f1;"></div>
<div class="r" style="left:1015.5px;top:125px;width:7px;height:13px;background:#c1c1c1;"></div>
<svg class="r" style="left:1016.5px;top:119.5px;" width="5" height="3.5" viewBox="0 0 5 3.5"><path d="M0 3.2 L2.5 0.3 L5 3.2Z" fill="#6a6a6a"/></svg>
<svg class="r" style="left:1016.5px;top:548.5px;" width="5" height="3.5" viewBox="0 0 5 3.5"><path d="M0 0.3 L2.5 3.2 L5 0.3Z" fill="#555"/></svg>
<div class="r" style="left:722px;top:556.5px;width:292px;height:7px;background:#f1f1f1;"></div>
<div class="r" style="left:731px;top:557.3px;width:30px;height:5.4px;background:#c8c8c8;"></div>
<svg class="r" style="left:725px;top:558px;" width="3.5" height="5" viewBox="0 0 3.5 5"><path d="M3.2 0 L0.3 2.5 L3.2 5Z" fill="#555"/></svg>
<svg class="r" style="left:1008.5px;top:558px;" width="3.5" height="5" viewBox="0 0 3.5 5"><path d="M0.3 0 L3.2 2.5 L0.3 5Z" fill="#555"/></svg>
<svg class="r" style="left:725px;top:484.6px;" width="22.6" height="22.6" viewBox="0 0 21 21"><circle cx="10.5" cy="10.5" r="10" fill="#f8f8f8" stroke="#dedede" stroke-width="0.7"/><path d="M4.8 12.2 Q4.8 6.6 10.4 6.6 Q15.2 6.6 15.8 11.6 L17.2 13.4 L4.4 13.4Z" fill="#fdfdfd" stroke="#7d7d7d" stroke-width="0.9" stroke-linejoin="round"/><path d="M7.4 10.6h5.4" stroke="#8d8d8d" stroke-width="0.8" stroke-dasharray="1 0.9"/></svg>
<div class="r" style="left:793.6px;top:527px;width:145.5px;height:11.4px;background:#dedede;border-radius:2px 2px 0 0"></div>
<div class="r" style="left:793.6px;top:527px;width:35.8px;height:11.4px;background:#a6cce8;border-radius:2px 0 0 0"></div>
<span class="t" style="left:799.30px;top:528.40px;font-size:7px;line-height:8.4px;color:#2d6f9c;transform:scaleX(0.889);">Lifecycle</span>
<span class="t" style="left:834.70px;top:528.40px;font-size:7px;line-height:8.4px;color:#555;transform:scaleX(0.918);">Simulation</span>
<span class="t" style="left:880.45px;top:528.40px;font-size:7px;line-height:8.4px;color:#555;transform:scaleX(0.897);">View</span>
<span class="t" style="left:914.40px;top:528.40px;font-size:7px;line-height:8.4px;color:#555;transform:scaleX(0.918);">Tools</span>
<svg class="r" style="left:941.5px;top:527.5px;" width="10" height="8" viewBox="0 0 10 8"><path d="M1 1.4 L5 5 L9 1.4 M2.6 1 L5 3.2 L7.4 1" fill="none" stroke="#c4c4c4" stroke-width="0.9"/></svg>
<div class="r" style="left:748.2px;top:538.3px;width:250.3px;height:24.7px;background:#d9d9d9;border:0.8px solid #ececec;box-sizing:border-box;border-radius:1.5px"></div>
<div class="r" style="left:749px;top:539.1px;width:21.8px;height:23.1px;background:#fafafa;"></div>
<svg class="r" style="left:749.6px;top:541.5px" width="18" height="18" viewBox="-9 -9 18 18"><g transform="scale(1.15)"><g transform="translate(-7,-7)"><path d="M1.5 3 C1.5 1 8.5 1 8.5 3 L8.5 10 C8.5 12 1.5 12 1.5 10Z" fill="#e9e9e9" stroke="#3c3c3c" stroke-width="0.9"/><path d="M1.5 5.4 C3 6.8 7 6.8 8.5 5.4 M1.5 7.8 C3 9.2 7 9.2 8.5 7.8" stroke="#3c3c3c" stroke-width="0.7" fill="none"/><path d="M4 4.6 C4 2.8 11 2.8 11 4.6 L11 11.6 C11 13.4 4 13.4 4 11.6Z" fill="#e9e9e9" stroke="#3c3c3c" stroke-width="0.9"/><path d="M4 7 C5.5 8.4 9.5 8.4 11 7 M4 9.4 C5.5 10.8 9.5 10.8 11 9.4" stroke="#3c3c3c" stroke-width="0.7" fill="none"/><path d="M10.6 13.6 L10.6 10.4 L8.8 10.4 L11.8 7.2 L14.6 10.4 L12.8 10.4 L12.8 13.6Z" fill="#1f86c4" stroke="#15608f" stroke-width="0.5"/></g></g></svg>
<svg class="r" style="left:773.4px;top:541.5px" width="18" height="18" viewBox="-9 -9 18 18"><g transform="scale(1.15)"><g transform="translate(-7,-7)" fill="none" stroke="#a6a6a6" stroke-width="1.1"><rect x="1.5" y="6.4" width="11" height="7" rx="0.8" fill="#cfcfcf"/><path d="M3.6 6.4 L3.6 4.4 C3.6 0.8 10.4 0.8 10.4 4.4 L10.4 6.4"/><path d="M7 8.6v2.6" stroke-width="1.3"/></g></g></svg>
<svg class="r" style="left:795.6px;top:541.5px" width="18" height="18" viewBox="-9 -9 18 18"><g transform="scale(1.15)"><g transform="translate(-7,-7)" fill="none" stroke="#a6a6a6" stroke-width="1.1"><rect x="1" y="6.8" width="10.4" height="6.6" rx="0.8" fill="#cfcfcf"/><path d="M7.8 6.8 L7.8 4.2 C7.8 0.8 13.6 0.8 13.6 4.2 L13.6 5.4"/><path d="M6.2 9v2.4" stroke-width="1.3"/></g></g></svg>
<svg class="r" style="left:817.9px;top:541.5px" width="18" height="18" viewBox="-9 -9 18 18"><g transform="scale(1.15)"><g transform="translate(-7,-7)" fill="none" stroke="#a6a6a6" stroke-width="1"><path d="M1.5 3 C1.5 0.8 10.5 0.8 10.5 3 L10.5 11 C10.5 13.2 1.5 13.2 1.5 11Z"/><path d="M1.5 3 C1.5 5.2 10.5 5.2 10.5 3 M1.5 5.8 C3 7.6 9 7.6 10.5 5.8 M1.5 8.6 C3 10.4 9 10.4 10.5 8.6"/><path d="M13.6 9.4 A2.6 2.6 0 1 0 13 12.4"/></g></g></svg>
<svg class="r" style="left:841.0px;top:541.5px" width="18" height="18" viewBox="-9 -9 18 18"><g transform="scale(1.15)"><g transform="translate(-7,-7)" fill="none" stroke="#a6a6a6" stroke-width="1.3"><circle cx="7.4" cy="6.8" r="3.6"/><path d="M10 9.6 L13.4 13.4" stroke-width="1.7"/><path d="M0.4 7h3.2 M9.4 3.2 L12.6 1 M10.8 0.6 L13 0.8 L12.4 3" stroke-width="0.9"/></g></g></svg>
<svg class="r" style="left:863.0px;top:541.5px" width="18" height="18" viewBox="-9 -9 18 18"><g transform="scale(1.15)"><g transform="translate(-7,-7)" fill="none" stroke="#a6a6a6" stroke-width="1"><circle cx="7" cy="7" r="6.2"/><circle cx="7" cy="7" r="4.2" stroke-dasharray="1.6 1"/><path d="M4.4 7h5.2" stroke-width="1.2"/></g></g></svg>
<svg class="r" style="left:885.3px;top:541.5px" width="18" height="18" viewBox="-9 -9 18 18"><g transform="scale(1.15)"><g transform="translate(-7,-7)" fill="none" stroke="#a6a6a6" stroke-width="1.2"><circle cx="3" cy="2.4" r="1.5"/><circle cx="3" cy="12" r="1.5"/><path d="M3 3.8v6.8"/><path d="M9.6 7.6v5.6 M6.8 10.4h5.6" stroke-width="2"/></g></g></svg>
<svg class="r" style="left:908.4px;top:541.5px" width="18" height="18" viewBox="-9 -9 18 18"><g transform="scale(1.15)"><g transform="translate(-7,-7)" fill="none" stroke="#a6a6a6" stroke-width="1.2"><circle cx="2.6" cy="2.4" r="1.4"/><circle cx="2.6" cy="12" r="1.4"/><circle cx="9" cy="12" r="1.4"/><path d="M2.6 3.8v6.8 M2.6 7h6.4v3.6"/><path d="M10.6 1v5.2 M8 3.6h5.2" stroke-width="1.8"/></g></g></svg>
<svg class="r" style="left:930.1px;top:541.5px" width="18" height="18" viewBox="-9 -9 18 18"><g transform="scale(1.15)"><g transform="translate(-7,-7)" fill="none" stroke="#a6a6a6" stroke-width="1.2"><circle cx="2.6" cy="2.4" r="1.4"/><circle cx="2.6" cy="12" r="1.4"/><circle cx="9" cy="2.4" r="1.4"/><path d="M2.6 3.8v6.8 M2.6 7h6.4v-3.2"/><path d="M10.8 8v5.2 M8.2 10.6h5.2" stroke-width="1.8"/></g></g></svg>
<svg class="r" style="left:952.1px;top:541.5px" width="18" height="18" viewBox="-9 -9 18 18"><g transform="scale(1.15)"><g transform="translate(-7,-7)" fill="none" stroke="#a6a6a6" stroke-width="1.1"><circle cx="5.4" cy="3.6" r="2.6"/><path d="M1 13 C1 7.4 9.8 7.4 9.8 11"/><path d="M7.6 11.8h5 M10.8 9.8 L13 11.8 L10.8 13.8"/></g></g></svg>
<svg class="r" style="left:974.7px;top:541.5px" width="18" height="18" viewBox="-9 -9 18 18"><g transform="scale(1.15)"><g transform="translate(-7,-7)" fill="none" stroke="#a6a6a6" stroke-width="1.1"><path d="M5 3.4 L5 1.6 L13 1.6 L13 12.4 L5 12.4 L5 10.6"/><path d="M0.6 7h7.6 M6 4.8 L8.4 7 L6 9.2"/></g></g></svg>
<svg class="r" style="left:736.5px;top:130.5px;" width="7" height="11" viewBox="0 0 7 11"><path d="M0.6 0.6 L0.6 8.6 L2.5 6.9 L3.9 10 L5.1 9.4 L3.8 6.5 L6.2 6.3Z" fill="#fff" stroke="#222" stroke-width="0.7" stroke-linejoin="round"/></svg>
<div class="r" style="left:0px;top:565.6px;width:1024px;height:10.4px;background:#e5e5e5;"></div>
<span class="t" style="left:1.00px;top:566.80px;font-size:8px;line-height:9.6px;color:#111;transform:scaleX(0.732);">SOLIDWORKS Premium 2021 SP3.0</span>
<span class="t" style="left:806.10px;top:566.80px;font-size:8px;line-height:9.6px;color:#111;transform:scaleX(0.779);">Under Defined</span>
<span class="t" style="left:856.00px;top:566.80px;font-size:8px;line-height:9.6px;color:#111;transform:scaleX(0.801);">Editing Assembly</span>
<span class="t" style="left:973.00px;top:566.80px;font-size:8px;line-height:9.6px;color:#111;transform:scaleX(0.651);">IPS</span>
<svg class="r" style="left:996.2px;top:570.4px;" width="3" height="2" viewBox="0 0 3 2"><path d="M0 0h2.8l-1.4 1.7z" fill="#444"/></svg>
<svg class="r" style="left:1012.5px;top:566.8px;" width="9" height="8" viewBox="0 0 9 8"><path d="M1 1 L5.6 1 L8.2 3.6 L8.2 5 L5 7.4 L1 3.6Z" fill="#efe6c6" stroke="#555" stroke-width="0.7"/><circle cx="3" cy="2.8" r="0.7" fill="#555"/><circle cx="6.4" cy="5.6" r="1.6" fill="#7da7c7" stroke="#456" stroke-width="0.4"/></svg>
</body></html>
